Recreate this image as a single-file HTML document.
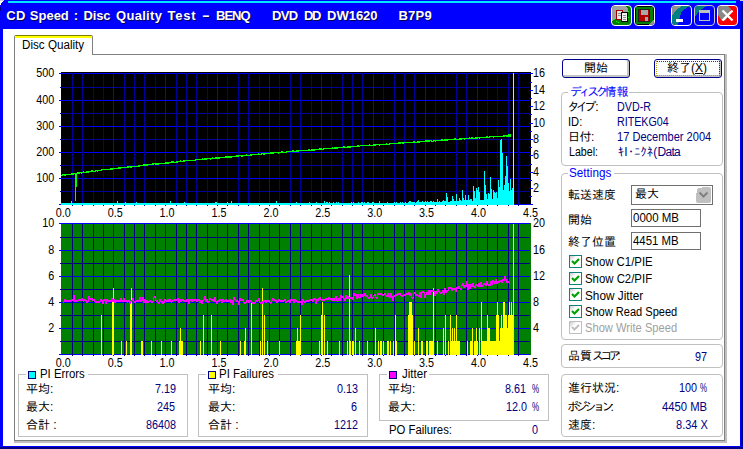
<!DOCTYPE html>
<html lang="ja">
<head>
<meta charset="utf-8">
<title>CD Speed : Disc Quality Test</title>
<style>
html,body{margin:0;padding:0;}
body{width:743px;height:449px;overflow:hidden;background:#0000ff;position:relative;
 font-family:"Liberation Sans","IPAGothic",sans-serif;font-size:12px;color:#000;line-height:14px;}
div,span{position:absolute;box-sizing:border-box;white-space:nowrap;}
#client{left:3px;top:29px;width:737px;height:417px;background:#fff;}
#fr{left:740px;top:3px;width:3px;height:446px;background:#000080;border-left:1px solid #0000ff;}
#fb{left:0;top:446px;width:743px;height:3px;background:#000080;border-top:1px solid #0000ff;}
#cy{left:8px;top:1px;width:728px;height:2px;background:#00e8ff;}
#title{left:7px;top:7px;height:18px;line-height:18px;font-weight:bold;font-size:13px;color:#fff;
 letter-spacing:0;text-shadow:1px 1px 0 #000050;white-space:pre;}
.tb{top:5px;width:21px;height:21px;border:1px solid #fff;border-radius:4px;overflow:hidden;}
#tab{left:14px;top:35px;width:79px;height:20px;border:1px solid #808080;border-top:1px solid #808000;border-bottom:none;border-radius:2px 2px 0 0;background:#fff;overflow:hidden;z-index:3;}
#tab i{position:absolute;left:0;top:0;width:100%;height:2px;background:#ffff00;}
#tab span{left:7px;top:2px;transform:scaleX(.96);}
#panel{left:14px;top:54px;width:711px;height:387px;border:1px solid #808080;background:#fff;}
svg#charts{position:absolute;left:0;top:0;}
.grp{border:1px solid #c0c0c0;}
.rgrp{border:1px solid #c0c0c0;border-radius:4px;}
.cap{background:#fff;padding:0 2px;}
.lbl{color:#000;}
.val{color:#000080;text-align:right;}
.sq{width:8px;height:8px;border:1px solid #000080;}
.btn{height:19px;border:1px solid #000090;border-radius:3px;background:#fff;text-align:center;line-height:16px;box-shadow:inset -1px -2px 0 #c4c4c4, inset -2px 0 0 #b8c4e8;}
.edit{border:1px solid #707070;background:#fff;line-height:15px;padding-left:3px;}
.cb{width:13px;height:13px;border:1px solid #108080;background:linear-gradient(135deg,#c8c8c8 0,#fff 35%);}
.cb svg{position:absolute;left:1px;top:1px;}
.tx{transform-origin:0 0;z-index:5;}
</style>
</head>
<body>
<div id="fr"></div><div id="fb"></div>
<div id="client"></div>
<div id="cy"></div>
<div style="left:0;top:0;width:4px;height:1px;background:#d0d0d0"></div>
<div style="left:0;top:1px;width:3px;height:1px;background:#fff"></div>
<div style="left:0;top:2px;width:2px;height:1px;background:#fff"></div>
<div style="left:0;top:3px;width:1px;height:2px;background:#fff"></div>
<div style="left:0;top:7px;width:1px;height:4px;background:#000080"></div>
<div style="left:740px;top:0;width:3px;height:1px;background:#ccc"></div>
<div id="title"><span style="left:-0.8px;letter-spacing:0.5px">CD </span><span style="left:22.8px;letter-spacing:0px">Speed </span><span style="left:66.8px;letter-spacing:0px">: </span><span style="left:76.6px;letter-spacing:-0.2px">Disc </span><span style="left:109.0px;letter-spacing:0.3px">Quality </span><span style="left:160.5px;letter-spacing:0.8px">Test </span><span style="left:195.3px;letter-spacing:0px;transform:scaleX(1.8);transform-origin:0 0">- </span><span style="left:209.0px;letter-spacing:-1px">BENQ </span><span style="left:265.0px;letter-spacing:-0.7px">DVD </span><span style="left:297.0px;letter-spacing:-1.5px">DD </span><span style="left:320.0px;letter-spacing:0px">DW1620 </span><span style="left:391.5px;letter-spacing:0.2px">B7P9 </span></div>

<!-- title buttons -->
<div class="tb" style="left:611px;background:#008000;">
 <svg width="19" height="19" viewBox="0 0 19 19" style="position:absolute;left:0;top:0" shape-rendering="crispEdges">
  <path d="M0 0h13l3 3v4h-7v6h-6l-3 2z" fill="#a0a0a0"/>
  <path d="M1 10h1v1h-1zM2 13h1v1h-1zM4 15h1v1h-1zM6 16h1v1h-1zM15 3h1v1h-1zM16 5h1v1h-1zM15 8h1v1h-1zM16 11h1v1h-1z" fill="#00ff00"/>
  <rect x="4.5" y="4.5" width="6" height="9" fill="#e8e8e8" stroke="#a00000" stroke-width="1"/>
  <rect x="9.5" y="6.5" width="6" height="9" fill="#f4f4f4" stroke="#000" stroke-width="1"/>
  <path d="M11 9h3M11 11h3M11 13h3M6 7h3M6 9h3" stroke="#909090" stroke-width="1" fill="none"/>
 </svg>
</div>
<div class="tb" style="left:634px;background:#000;">
 <svg width="19" height="19" viewBox="0 0 19 19" style="position:absolute;left:0;top:0" shape-rendering="crispEdges">
  <rect x="1" y="1" width="17" height="17" fill="#008000"/>
  <rect x="3" y="3" width="12" height="13" fill="#202020"/>
  <rect x="4" y="4" width="10" height="11" fill="#b00000"/>
  <rect x="6" y="4" width="7" height="5" fill="#a8a8a8"/>
  <rect x="10" y="11" width="3" height="4" fill="#a8a8a8"/>
  <path d="M13 19h6v-6z" fill="#909090"/>
 </svg>
</div>
<div class="tb" style="left:671px;background:#0000ff;">
 <svg width="19" height="19" viewBox="0 0 19 19" style="position:absolute;left:0;top:0" shape-rendering="crispEdges">
  <path d="M0 0h19c-6 2-10 5-11 10l-2 9h-6z" fill="#008080"/>
  <path d="M0 0h10l-6 4l-4 6z" fill="#909090"/>
  <rect x="4" y="13" width="7" height="3" fill="#fff"/>
 </svg>
</div>
<div class="tb" style="left:694px;background:#0000ff;border-color:#c8c8c8;">
 <svg width="19" height="19" viewBox="0 0 19 19" style="position:absolute;left:0;top:0" shape-rendering="crispEdges">
  <path d="M0 0h12l-7 4l-5 7z" fill="#008080"/>
  <rect x="4.5" y="4.5" width="10" height="10" fill="none" stroke="#c0c0c0" stroke-width="1"/>
  <rect x="4" y="4" width="11" height="3" fill="#c0c0c0"/>
 </svg>
</div>
<div class="tb" style="left:717px;background:#ff0000;">
 <svg width="19" height="19" viewBox="0 0 19 19" style="position:absolute;left:0;top:0">
  <path d="M0 0h10l3 3l-5 11l-4 1l-4-6z" fill="#888888"/>
  <path d="M4.5 4.5l10 10M14.5 4.5l-10 10" stroke="#fff" stroke-width="2.4" fill="none"/>
 </svg>
</div>

<div style="left:14px;top:441px;width:713px;height:2px;background:#c0c0c0"></div><div style="left:725px;top:54px;width:2px;height:389px;background:#c0c0c0"></div>
<div id="panel"></div>
<div id="tab"><i></i></div>

<svg id="charts" width="743" height="449" viewBox="0 0 743 449" shape-rendering="crispEdges"><rect x="61" y="72" width="470" height="133" fill="#000"/><rect x="59" y="73" width="471" height="1" fill="#0000ff"/><rect x="60" y="87" width="470" height="1" fill="#000098"/><rect x="59" y="100" width="471" height="1" fill="#0000ff"/><rect x="60" y="113" width="470" height="1" fill="#000098"/><rect x="59" y="126" width="471" height="1" fill="#0000ff"/><rect x="60" y="139" width="470" height="1" fill="#000098"/><rect x="59" y="152" width="471" height="1" fill="#0000ff"/><rect x="60" y="165" width="470" height="1" fill="#000098"/><rect x="59" y="178" width="471" height="1" fill="#0000ff"/><rect x="60" y="191" width="470" height="1" fill="#000098"/><rect x="59" y="204" width="471" height="1" fill="#0000ff"/><rect x="72" y="73" width="1" height="133" fill="#000098"/><rect x="82" y="73" width="1" height="133" fill="#000098"/><rect x="93" y="73" width="1" height="133" fill="#000098"/><rect x="103" y="73" width="1" height="133" fill="#000098"/><rect x="113" y="73" width="1" height="133" fill="#0000ff"/><rect x="124" y="73" width="1" height="133" fill="#000098"/><rect x="134" y="73" width="1" height="133" fill="#000098"/><rect x="144" y="73" width="1" height="133" fill="#000098"/><rect x="155" y="73" width="1" height="133" fill="#000098"/><rect x="165" y="73" width="1" height="133" fill="#0000ff"/><rect x="176" y="73" width="1" height="133" fill="#000098"/><rect x="186" y="73" width="1" height="133" fill="#000098"/><rect x="196" y="73" width="1" height="133" fill="#000098"/><rect x="207" y="73" width="1" height="133" fill="#000098"/><rect x="217" y="73" width="1" height="133" fill="#0000ff"/><rect x="227" y="73" width="1" height="133" fill="#000098"/><rect x="238" y="73" width="1" height="133" fill="#000098"/><rect x="248" y="73" width="1" height="133" fill="#000098"/><rect x="259" y="73" width="1" height="133" fill="#000098"/><rect x="269" y="73" width="1" height="133" fill="#0000ff"/><rect x="279" y="73" width="1" height="133" fill="#000098"/><rect x="290" y="73" width="1" height="133" fill="#000098"/><rect x="300" y="73" width="1" height="133" fill="#000098"/><rect x="311" y="73" width="1" height="133" fill="#000098"/><rect x="321" y="73" width="1" height="133" fill="#0000ff"/><rect x="331" y="73" width="1" height="133" fill="#000098"/><rect x="342" y="73" width="1" height="133" fill="#000098"/><rect x="352" y="73" width="1" height="133" fill="#000098"/><rect x="362" y="73" width="1" height="133" fill="#000098"/><rect x="373" y="73" width="1" height="133" fill="#0000ff"/><rect x="383" y="73" width="1" height="133" fill="#000098"/><rect x="394" y="73" width="1" height="133" fill="#000098"/><rect x="404" y="73" width="1" height="133" fill="#000098"/><rect x="414" y="73" width="1" height="133" fill="#000098"/><rect x="425" y="73" width="1" height="133" fill="#0000ff"/><rect x="435" y="73" width="1" height="133" fill="#000098"/><rect x="445" y="73" width="1" height="133" fill="#000098"/><rect x="456" y="73" width="1" height="133" fill="#000098"/><rect x="466" y="73" width="1" height="133" fill="#000098"/><rect x="477" y="73" width="1" height="133" fill="#0000ff"/><rect x="487" y="73" width="1" height="133" fill="#000098"/><rect x="497" y="73" width="1" height="133" fill="#000098"/><rect x="508" y="73" width="1" height="133" fill="#000098"/><rect x="518" y="73" width="1" height="133" fill="#000098"/><rect x="529" y="73" width="4" height="1" fill="#0000ff"/><rect x="529" y="82" width="3" height="1" fill="#0000ff"/><rect x="529" y="90" width="4" height="1" fill="#0000ff"/><rect x="529" y="98" width="3" height="1" fill="#0000ff"/><rect x="529" y="106" width="4" height="1" fill="#0000ff"/><rect x="529" y="114" width="3" height="1" fill="#0000ff"/><rect x="529" y="123" width="4" height="1" fill="#0000ff"/><rect x="529" y="131" width="3" height="1" fill="#0000ff"/><rect x="529" y="139" width="4" height="1" fill="#0000ff"/><rect x="529" y="147" width="3" height="1" fill="#0000ff"/><rect x="529" y="155" width="4" height="1" fill="#0000ff"/><rect x="529" y="164" width="3" height="1" fill="#0000ff"/><rect x="529" y="172" width="4" height="1" fill="#0000ff"/><rect x="529" y="180" width="3" height="1" fill="#0000ff"/><rect x="529" y="188" width="4" height="1" fill="#0000ff"/><rect x="529" y="196" width="3" height="1" fill="#0000ff"/><rect x="529" y="204" width="4" height="1" fill="#0000ff"/><rect x="61" y="203" width="1" height="2" fill="#00ffff"/><rect x="62" y="203" width="1" height="2" fill="#00ffff"/><rect x="63" y="203" width="1" height="2" fill="#00ffff"/><rect x="64" y="203" width="1" height="2" fill="#00ffff"/><rect x="65" y="203" width="1" height="2" fill="#00ffff"/><rect x="66" y="203" width="1" height="2" fill="#00ffff"/><rect x="67" y="203" width="1" height="2" fill="#00ffff"/><rect x="68" y="203" width="1" height="2" fill="#00ffff"/><rect x="69" y="203" width="1" height="2" fill="#00ffff"/><rect x="70" y="203" width="1" height="2" fill="#00ffff"/><rect x="71" y="201" width="1" height="4" fill="#00ffff"/><rect x="72" y="203" width="1" height="2" fill="#00ffff"/><rect x="73" y="203" width="1" height="2" fill="#00ffff"/><rect x="74" y="203" width="1" height="2" fill="#00ffff"/><rect x="75" y="203" width="1" height="2" fill="#00ffff"/><rect x="76" y="203" width="1" height="2" fill="#00ffff"/><rect x="77" y="203" width="1" height="2" fill="#00ffff"/><rect x="78" y="203" width="1" height="2" fill="#00ffff"/><rect x="79" y="203" width="1" height="2" fill="#00ffff"/><rect x="80" y="203" width="1" height="2" fill="#00ffff"/><rect x="81" y="203" width="1" height="2" fill="#00ffff"/><rect x="82" y="203" width="1" height="2" fill="#00ffff"/><rect x="83" y="203" width="1" height="2" fill="#00ffff"/><rect x="84" y="203" width="1" height="2" fill="#00ffff"/><rect x="85" y="203" width="1" height="2" fill="#00ffff"/><rect x="86" y="203" width="1" height="2" fill="#00ffff"/><rect x="87" y="203" width="1" height="2" fill="#00ffff"/><rect x="88" y="203" width="1" height="2" fill="#00ffff"/><rect x="89" y="203" width="1" height="2" fill="#00ffff"/><rect x="90" y="203" width="1" height="2" fill="#00ffff"/><rect x="91" y="203" width="1" height="2" fill="#00ffff"/><rect x="92" y="203" width="1" height="2" fill="#00ffff"/><rect x="93" y="203" width="1" height="2" fill="#00ffff"/><rect x="94" y="203" width="1" height="2" fill="#00ffff"/><rect x="95" y="203" width="1" height="2" fill="#00ffff"/><rect x="96" y="203" width="1" height="2" fill="#00ffff"/><rect x="97" y="203" width="1" height="2" fill="#00ffff"/><rect x="98" y="203" width="1" height="2" fill="#00ffff"/><rect x="99" y="203" width="1" height="2" fill="#00ffff"/><rect x="100" y="203" width="1" height="2" fill="#00ffff"/><rect x="101" y="203" width="1" height="2" fill="#00ffff"/><rect x="102" y="203" width="1" height="2" fill="#00ffff"/><rect x="103" y="203" width="1" height="2" fill="#00ffff"/><rect x="104" y="203" width="1" height="2" fill="#00ffff"/><rect x="105" y="203" width="1" height="2" fill="#00ffff"/><rect x="106" y="203" width="1" height="2" fill="#00ffff"/><rect x="107" y="203" width="1" height="2" fill="#00ffff"/><rect x="108" y="203" width="1" height="2" fill="#00ffff"/><rect x="109" y="203" width="1" height="2" fill="#00ffff"/><rect x="110" y="203" width="1" height="2" fill="#00ffff"/><rect x="111" y="203" width="1" height="2" fill="#00ffff"/><rect x="112" y="203" width="1" height="2" fill="#00ffff"/><rect x="113" y="203" width="1" height="2" fill="#00ffff"/><rect x="114" y="203" width="1" height="2" fill="#00ffff"/><rect x="115" y="203" width="1" height="2" fill="#00ffff"/><rect x="116" y="203" width="1" height="2" fill="#00ffff"/><rect x="117" y="201" width="1" height="4" fill="#00ffff"/><rect x="118" y="203" width="1" height="2" fill="#00ffff"/><rect x="119" y="203" width="1" height="2" fill="#00ffff"/><rect x="120" y="203" width="1" height="2" fill="#00ffff"/><rect x="121" y="203" width="1" height="2" fill="#00ffff"/><rect x="122" y="203" width="1" height="2" fill="#00ffff"/><rect x="123" y="203" width="1" height="2" fill="#00ffff"/><rect x="124" y="203" width="1" height="2" fill="#00ffff"/><rect x="125" y="202" width="1" height="3" fill="#00ffff"/><rect x="126" y="203" width="1" height="2" fill="#00ffff"/><rect x="127" y="203" width="1" height="2" fill="#00ffff"/><rect x="128" y="203" width="1" height="2" fill="#00ffff"/><rect x="129" y="203" width="1" height="2" fill="#00ffff"/><rect x="130" y="203" width="1" height="2" fill="#00ffff"/><rect x="131" y="203" width="1" height="2" fill="#00ffff"/><rect x="132" y="203" width="1" height="2" fill="#00ffff"/><rect x="133" y="203" width="1" height="2" fill="#00ffff"/><rect x="134" y="203" width="1" height="2" fill="#00ffff"/><rect x="135" y="203" width="1" height="2" fill="#00ffff"/><rect x="136" y="202" width="1" height="3" fill="#00ffff"/><rect x="137" y="203" width="1" height="2" fill="#00ffff"/><rect x="138" y="203" width="1" height="2" fill="#00ffff"/><rect x="139" y="203" width="1" height="2" fill="#00ffff"/><rect x="140" y="203" width="1" height="2" fill="#00ffff"/><rect x="141" y="203" width="1" height="2" fill="#00ffff"/><rect x="142" y="203" width="1" height="2" fill="#00ffff"/><rect x="143" y="203" width="1" height="2" fill="#00ffff"/><rect x="144" y="203" width="1" height="2" fill="#00ffff"/><rect x="145" y="203" width="1" height="2" fill="#00ffff"/><rect x="146" y="203" width="1" height="2" fill="#00ffff"/><rect x="147" y="203" width="1" height="2" fill="#00ffff"/><rect x="148" y="203" width="1" height="2" fill="#00ffff"/><rect x="149" y="203" width="1" height="2" fill="#00ffff"/><rect x="150" y="203" width="1" height="2" fill="#00ffff"/><rect x="151" y="203" width="1" height="2" fill="#00ffff"/><rect x="152" y="203" width="1" height="2" fill="#00ffff"/><rect x="153" y="203" width="1" height="2" fill="#00ffff"/><rect x="154" y="203" width="1" height="2" fill="#00ffff"/><rect x="155" y="203" width="1" height="2" fill="#00ffff"/><rect x="156" y="203" width="1" height="2" fill="#00ffff"/><rect x="157" y="203" width="1" height="2" fill="#00ffff"/><rect x="158" y="203" width="1" height="2" fill="#00ffff"/><rect x="159" y="203" width="1" height="2" fill="#00ffff"/><rect x="160" y="203" width="1" height="2" fill="#00ffff"/><rect x="161" y="203" width="1" height="2" fill="#00ffff"/><rect x="162" y="203" width="1" height="2" fill="#00ffff"/><rect x="163" y="203" width="1" height="2" fill="#00ffff"/><rect x="164" y="203" width="1" height="2" fill="#00ffff"/><rect x="165" y="203" width="1" height="2" fill="#00ffff"/><rect x="166" y="203" width="1" height="2" fill="#00ffff"/><rect x="167" y="203" width="1" height="2" fill="#00ffff"/><rect x="168" y="203" width="1" height="2" fill="#00ffff"/><rect x="169" y="203" width="1" height="2" fill="#00ffff"/><rect x="170" y="201" width="1" height="4" fill="#00ffff"/><rect x="171" y="203" width="1" height="2" fill="#00ffff"/><rect x="172" y="203" width="1" height="2" fill="#00ffff"/><rect x="173" y="203" width="1" height="2" fill="#00ffff"/><rect x="174" y="203" width="1" height="2" fill="#00ffff"/><rect x="175" y="203" width="1" height="2" fill="#00ffff"/><rect x="176" y="203" width="1" height="2" fill="#00ffff"/><rect x="177" y="203" width="1" height="2" fill="#00ffff"/><rect x="178" y="203" width="1" height="2" fill="#00ffff"/><rect x="179" y="203" width="1" height="2" fill="#00ffff"/><rect x="180" y="203" width="1" height="2" fill="#00ffff"/><rect x="181" y="203" width="1" height="2" fill="#00ffff"/><rect x="182" y="203" width="1" height="2" fill="#00ffff"/><rect x="183" y="203" width="1" height="2" fill="#00ffff"/><rect x="184" y="202" width="1" height="3" fill="#00ffff"/><rect x="185" y="203" width="1" height="2" fill="#00ffff"/><rect x="186" y="203" width="1" height="2" fill="#00ffff"/><rect x="187" y="203" width="1" height="2" fill="#00ffff"/><rect x="188" y="203" width="1" height="2" fill="#00ffff"/><rect x="189" y="203" width="1" height="2" fill="#00ffff"/><rect x="190" y="203" width="1" height="2" fill="#00ffff"/><rect x="191" y="203" width="1" height="2" fill="#00ffff"/><rect x="192" y="203" width="1" height="2" fill="#00ffff"/><rect x="193" y="203" width="1" height="2" fill="#00ffff"/><rect x="194" y="203" width="1" height="2" fill="#00ffff"/><rect x="195" y="203" width="1" height="2" fill="#00ffff"/><rect x="196" y="203" width="1" height="2" fill="#00ffff"/><rect x="197" y="203" width="1" height="2" fill="#00ffff"/><rect x="198" y="203" width="1" height="2" fill="#00ffff"/><rect x="199" y="203" width="1" height="2" fill="#00ffff"/><rect x="200" y="203" width="1" height="2" fill="#00ffff"/><rect x="201" y="203" width="1" height="2" fill="#00ffff"/><rect x="202" y="203" width="1" height="2" fill="#00ffff"/><rect x="203" y="203" width="1" height="2" fill="#00ffff"/><rect x="204" y="203" width="1" height="2" fill="#00ffff"/><rect x="205" y="203" width="1" height="2" fill="#00ffff"/><rect x="206" y="203" width="1" height="2" fill="#00ffff"/><rect x="207" y="203" width="1" height="2" fill="#00ffff"/><rect x="208" y="203" width="1" height="2" fill="#00ffff"/><rect x="209" y="203" width="1" height="2" fill="#00ffff"/><rect x="210" y="203" width="1" height="2" fill="#00ffff"/><rect x="211" y="203" width="1" height="2" fill="#00ffff"/><rect x="212" y="203" width="1" height="2" fill="#00ffff"/><rect x="213" y="203" width="1" height="2" fill="#00ffff"/><rect x="214" y="203" width="1" height="2" fill="#00ffff"/><rect x="215" y="202" width="1" height="3" fill="#00ffff"/><rect x="216" y="202" width="1" height="3" fill="#00ffff"/><rect x="217" y="203" width="1" height="2" fill="#00ffff"/><rect x="218" y="203" width="1" height="2" fill="#00ffff"/><rect x="219" y="203" width="1" height="2" fill="#00ffff"/><rect x="220" y="203" width="1" height="2" fill="#00ffff"/><rect x="221" y="203" width="1" height="2" fill="#00ffff"/><rect x="222" y="203" width="1" height="2" fill="#00ffff"/><rect x="223" y="203" width="1" height="2" fill="#00ffff"/><rect x="224" y="203" width="1" height="2" fill="#00ffff"/><rect x="225" y="203" width="1" height="2" fill="#00ffff"/><rect x="226" y="203" width="1" height="2" fill="#00ffff"/><rect x="227" y="202" width="1" height="3" fill="#00ffff"/><rect x="228" y="203" width="1" height="2" fill="#00ffff"/><rect x="229" y="203" width="1" height="2" fill="#00ffff"/><rect x="230" y="203" width="1" height="2" fill="#00ffff"/><rect x="231" y="201" width="1" height="4" fill="#00ffff"/><rect x="232" y="203" width="1" height="2" fill="#00ffff"/><rect x="233" y="203" width="1" height="2" fill="#00ffff"/><rect x="234" y="203" width="1" height="2" fill="#00ffff"/><rect x="235" y="203" width="1" height="2" fill="#00ffff"/><rect x="236" y="203" width="1" height="2" fill="#00ffff"/><rect x="237" y="203" width="1" height="2" fill="#00ffff"/><rect x="238" y="203" width="1" height="2" fill="#00ffff"/><rect x="239" y="203" width="1" height="2" fill="#00ffff"/><rect x="240" y="203" width="1" height="2" fill="#00ffff"/><rect x="241" y="203" width="1" height="2" fill="#00ffff"/><rect x="242" y="203" width="1" height="2" fill="#00ffff"/><rect x="243" y="203" width="1" height="2" fill="#00ffff"/><rect x="244" y="203" width="1" height="2" fill="#00ffff"/><rect x="245" y="203" width="1" height="2" fill="#00ffff"/><rect x="246" y="203" width="1" height="2" fill="#00ffff"/><rect x="247" y="203" width="1" height="2" fill="#00ffff"/><rect x="248" y="203" width="1" height="2" fill="#00ffff"/><rect x="249" y="203" width="1" height="2" fill="#00ffff"/><rect x="250" y="203" width="1" height="2" fill="#00ffff"/><rect x="251" y="203" width="1" height="2" fill="#00ffff"/><rect x="252" y="203" width="1" height="2" fill="#00ffff"/><rect x="253" y="203" width="1" height="2" fill="#00ffff"/><rect x="254" y="203" width="1" height="2" fill="#00ffff"/><rect x="255" y="203" width="1" height="2" fill="#00ffff"/><rect x="256" y="203" width="1" height="2" fill="#00ffff"/><rect x="257" y="203" width="1" height="2" fill="#00ffff"/><rect x="258" y="203" width="1" height="2" fill="#00ffff"/><rect x="259" y="203" width="1" height="2" fill="#00ffff"/><rect x="260" y="203" width="1" height="2" fill="#00ffff"/><rect x="261" y="203" width="1" height="2" fill="#00ffff"/><rect x="262" y="203" width="1" height="2" fill="#00ffff"/><rect x="263" y="203" width="1" height="2" fill="#00ffff"/><rect x="264" y="203" width="1" height="2" fill="#00ffff"/><rect x="265" y="203" width="1" height="2" fill="#00ffff"/><rect x="266" y="203" width="1" height="2" fill="#00ffff"/><rect x="267" y="203" width="1" height="2" fill="#00ffff"/><rect x="268" y="203" width="1" height="2" fill="#00ffff"/><rect x="269" y="203" width="1" height="2" fill="#00ffff"/><rect x="270" y="203" width="1" height="2" fill="#00ffff"/><rect x="271" y="203" width="1" height="2" fill="#00ffff"/><rect x="272" y="203" width="1" height="2" fill="#00ffff"/><rect x="273" y="203" width="1" height="2" fill="#00ffff"/><rect x="274" y="203" width="1" height="2" fill="#00ffff"/><rect x="275" y="203" width="1" height="2" fill="#00ffff"/><rect x="276" y="201" width="1" height="4" fill="#00ffff"/><rect x="277" y="203" width="1" height="2" fill="#00ffff"/><rect x="278" y="203" width="1" height="2" fill="#00ffff"/><rect x="279" y="203" width="1" height="2" fill="#00ffff"/><rect x="280" y="203" width="1" height="2" fill="#00ffff"/><rect x="281" y="203" width="1" height="2" fill="#00ffff"/><rect x="282" y="203" width="1" height="2" fill="#00ffff"/><rect x="283" y="203" width="1" height="2" fill="#00ffff"/><rect x="284" y="203" width="1" height="2" fill="#00ffff"/><rect x="285" y="203" width="1" height="2" fill="#00ffff"/><rect x="286" y="203" width="1" height="2" fill="#00ffff"/><rect x="287" y="203" width="1" height="2" fill="#00ffff"/><rect x="288" y="203" width="1" height="2" fill="#00ffff"/><rect x="289" y="203" width="1" height="2" fill="#00ffff"/><rect x="290" y="203" width="1" height="2" fill="#00ffff"/><rect x="291" y="203" width="1" height="2" fill="#00ffff"/><rect x="292" y="203" width="1" height="2" fill="#00ffff"/><rect x="293" y="203" width="1" height="2" fill="#00ffff"/><rect x="294" y="203" width="1" height="2" fill="#00ffff"/><rect x="295" y="203" width="1" height="2" fill="#00ffff"/><rect x="296" y="202" width="1" height="3" fill="#00ffff"/><rect x="297" y="203" width="1" height="2" fill="#00ffff"/><rect x="298" y="203" width="1" height="2" fill="#00ffff"/><rect x="299" y="203" width="1" height="2" fill="#00ffff"/><rect x="300" y="203" width="1" height="2" fill="#00ffff"/><rect x="301" y="203" width="1" height="2" fill="#00ffff"/><rect x="302" y="203" width="1" height="2" fill="#00ffff"/><rect x="303" y="203" width="1" height="2" fill="#00ffff"/><rect x="304" y="203" width="1" height="2" fill="#00ffff"/><rect x="305" y="203" width="1" height="2" fill="#00ffff"/><rect x="306" y="203" width="1" height="2" fill="#00ffff"/><rect x="307" y="203" width="1" height="2" fill="#00ffff"/><rect x="308" y="203" width="1" height="2" fill="#00ffff"/><rect x="309" y="202" width="1" height="3" fill="#00ffff"/><rect x="310" y="203" width="1" height="2" fill="#00ffff"/><rect x="311" y="203" width="1" height="2" fill="#00ffff"/><rect x="312" y="203" width="1" height="2" fill="#00ffff"/><rect x="313" y="203" width="1" height="2" fill="#00ffff"/><rect x="314" y="203" width="1" height="2" fill="#00ffff"/><rect x="315" y="203" width="1" height="2" fill="#00ffff"/><rect x="316" y="202" width="1" height="3" fill="#00ffff"/><rect x="317" y="203" width="1" height="2" fill="#00ffff"/><rect x="318" y="203" width="1" height="2" fill="#00ffff"/><rect x="319" y="203" width="1" height="2" fill="#00ffff"/><rect x="320" y="203" width="1" height="2" fill="#00ffff"/><rect x="321" y="203" width="1" height="2" fill="#00ffff"/><rect x="322" y="203" width="1" height="2" fill="#00ffff"/><rect x="323" y="203" width="1" height="2" fill="#00ffff"/><rect x="324" y="201" width="1" height="4" fill="#00ffff"/><rect x="325" y="203" width="1" height="2" fill="#00ffff"/><rect x="326" y="202" width="1" height="3" fill="#00ffff"/><rect x="327" y="202" width="1" height="3" fill="#00ffff"/><rect x="328" y="203" width="1" height="2" fill="#00ffff"/><rect x="329" y="202" width="1" height="3" fill="#00ffff"/><rect x="330" y="203" width="1" height="2" fill="#00ffff"/><rect x="331" y="203" width="1" height="2" fill="#00ffff"/><rect x="332" y="203" width="1" height="2" fill="#00ffff"/><rect x="333" y="202" width="1" height="3" fill="#00ffff"/><rect x="334" y="203" width="1" height="2" fill="#00ffff"/><rect x="335" y="203" width="1" height="2" fill="#00ffff"/><rect x="336" y="202" width="1" height="3" fill="#00ffff"/><rect x="337" y="203" width="1" height="2" fill="#00ffff"/><rect x="338" y="202" width="1" height="3" fill="#00ffff"/><rect x="339" y="203" width="1" height="2" fill="#00ffff"/><rect x="340" y="203" width="1" height="2" fill="#00ffff"/><rect x="341" y="203" width="1" height="2" fill="#00ffff"/><rect x="342" y="203" width="1" height="2" fill="#00ffff"/><rect x="343" y="203" width="1" height="2" fill="#00ffff"/><rect x="344" y="203" width="1" height="2" fill="#00ffff"/><rect x="345" y="203" width="1" height="2" fill="#00ffff"/><rect x="346" y="203" width="1" height="2" fill="#00ffff"/><rect x="347" y="203" width="1" height="2" fill="#00ffff"/><rect x="348" y="203" width="1" height="2" fill="#00ffff"/><rect x="349" y="203" width="1" height="2" fill="#00ffff"/><rect x="350" y="203" width="1" height="2" fill="#00ffff"/><rect x="351" y="202" width="1" height="3" fill="#00ffff"/><rect x="352" y="203" width="1" height="2" fill="#00ffff"/><rect x="353" y="202" width="1" height="3" fill="#00ffff"/><rect x="354" y="203" width="1" height="2" fill="#00ffff"/><rect x="355" y="203" width="1" height="2" fill="#00ffff"/><rect x="356" y="203" width="1" height="2" fill="#00ffff"/><rect x="357" y="203" width="1" height="2" fill="#00ffff"/><rect x="358" y="202" width="1" height="3" fill="#00ffff"/><rect x="359" y="203" width="1" height="2" fill="#00ffff"/><rect x="360" y="203" width="1" height="2" fill="#00ffff"/><rect x="361" y="202" width="1" height="3" fill="#00ffff"/><rect x="362" y="202" width="1" height="3" fill="#00ffff"/><rect x="363" y="203" width="1" height="2" fill="#00ffff"/><rect x="364" y="202" width="1" height="3" fill="#00ffff"/><rect x="365" y="203" width="1" height="2" fill="#00ffff"/><rect x="366" y="203" width="1" height="2" fill="#00ffff"/><rect x="367" y="202" width="1" height="3" fill="#00ffff"/><rect x="368" y="202" width="1" height="3" fill="#00ffff"/><rect x="369" y="203" width="1" height="2" fill="#00ffff"/><rect x="370" y="203" width="1" height="2" fill="#00ffff"/><rect x="371" y="203" width="1" height="2" fill="#00ffff"/><rect x="372" y="202" width="1" height="3" fill="#00ffff"/><rect x="373" y="202" width="1" height="3" fill="#00ffff"/><rect x="374" y="203" width="1" height="2" fill="#00ffff"/><rect x="375" y="203" width="1" height="2" fill="#00ffff"/><rect x="376" y="203" width="1" height="2" fill="#00ffff"/><rect x="377" y="203" width="1" height="2" fill="#00ffff"/><rect x="378" y="203" width="1" height="2" fill="#00ffff"/><rect x="379" y="201" width="1" height="4" fill="#00ffff"/><rect x="380" y="203" width="1" height="2" fill="#00ffff"/><rect x="381" y="203" width="1" height="2" fill="#00ffff"/><rect x="382" y="203" width="1" height="2" fill="#00ffff"/><rect x="383" y="203" width="1" height="2" fill="#00ffff"/><rect x="384" y="203" width="1" height="2" fill="#00ffff"/><rect x="385" y="203" width="1" height="2" fill="#00ffff"/><rect x="386" y="203" width="1" height="2" fill="#00ffff"/><rect x="387" y="202" width="1" height="3" fill="#00ffff"/><rect x="388" y="203" width="1" height="2" fill="#00ffff"/><rect x="389" y="203" width="1" height="2" fill="#00ffff"/><rect x="390" y="203" width="1" height="2" fill="#00ffff"/><rect x="391" y="203" width="1" height="2" fill="#00ffff"/><rect x="392" y="203" width="1" height="2" fill="#00ffff"/><rect x="393" y="203" width="1" height="2" fill="#00ffff"/><rect x="394" y="202" width="1" height="3" fill="#00ffff"/><rect x="395" y="203" width="1" height="2" fill="#00ffff"/><rect x="396" y="202" width="1" height="3" fill="#00ffff"/><rect x="397" y="203" width="1" height="2" fill="#00ffff"/><rect x="398" y="203" width="1" height="2" fill="#00ffff"/><rect x="399" y="203" width="1" height="2" fill="#00ffff"/><rect x="400" y="202" width="1" height="3" fill="#00ffff"/><rect x="401" y="203" width="1" height="2" fill="#00ffff"/><rect x="402" y="202" width="1" height="3" fill="#00ffff"/><rect x="403" y="203" width="1" height="2" fill="#00ffff"/><rect x="404" y="203" width="1" height="2" fill="#00ffff"/><rect x="405" y="202" width="1" height="3" fill="#00ffff"/><rect x="406" y="203" width="1" height="2" fill="#00ffff"/><rect x="407" y="203" width="1" height="2" fill="#00ffff"/><rect x="408" y="202" width="1" height="3" fill="#00ffff"/><rect x="409" y="201" width="1" height="4" fill="#00ffff"/><rect x="410" y="201" width="1" height="4" fill="#00ffff"/><rect x="411" y="202" width="1" height="3" fill="#00ffff"/><rect x="412" y="202" width="1" height="3" fill="#00ffff"/><rect x="413" y="202" width="1" height="3" fill="#00ffff"/><rect x="414" y="202" width="1" height="3" fill="#00ffff"/><rect x="415" y="203" width="1" height="2" fill="#00ffff"/><rect x="416" y="202" width="1" height="3" fill="#00ffff"/><rect x="417" y="201" width="1" height="4" fill="#00ffff"/><rect x="418" y="200" width="1" height="5" fill="#00ffff"/><rect x="419" y="202" width="1" height="3" fill="#00ffff"/><rect x="420" y="202" width="1" height="3" fill="#00ffff"/><rect x="421" y="202" width="1" height="3" fill="#00ffff"/><rect x="422" y="201" width="1" height="4" fill="#00ffff"/><rect x="423" y="202" width="1" height="3" fill="#00ffff"/><rect x="424" y="202" width="1" height="3" fill="#00ffff"/><rect x="425" y="201" width="1" height="4" fill="#00ffff"/><rect x="426" y="202" width="1" height="3" fill="#00ffff"/><rect x="427" y="201" width="1" height="4" fill="#00ffff"/><rect x="428" y="202" width="1" height="3" fill="#00ffff"/><rect x="429" y="202" width="1" height="3" fill="#00ffff"/><rect x="430" y="201" width="1" height="4" fill="#00ffff"/><rect x="431" y="201" width="1" height="4" fill="#00ffff"/><rect x="432" y="202" width="1" height="3" fill="#00ffff"/><rect x="433" y="201" width="1" height="4" fill="#00ffff"/><rect x="434" y="202" width="1" height="3" fill="#00ffff"/><rect x="435" y="202" width="1" height="3" fill="#00ffff"/><rect x="436" y="202" width="1" height="3" fill="#00ffff"/><rect x="437" y="199" width="1" height="6" fill="#00ffff"/><rect x="438" y="202" width="1" height="3" fill="#00ffff"/><rect x="439" y="201" width="1" height="4" fill="#00ffff"/><rect x="440" y="202" width="1" height="3" fill="#00ffff"/><rect x="441" y="202" width="1" height="3" fill="#00ffff"/><rect x="442" y="201" width="1" height="4" fill="#00ffff"/><rect x="443" y="200" width="1" height="5" fill="#00ffff"/><rect x="444" y="201" width="1" height="4" fill="#00ffff"/><rect x="445" y="201" width="1" height="4" fill="#00ffff"/><rect x="446" y="193" width="1" height="12" fill="#00ffff"/><rect x="447" y="197" width="1" height="8" fill="#00ffff"/><rect x="448" y="202" width="1" height="3" fill="#00ffff"/><rect x="449" y="202" width="1" height="3" fill="#00ffff"/><rect x="450" y="201" width="1" height="4" fill="#00ffff"/><rect x="451" y="201" width="1" height="4" fill="#00ffff"/><rect x="452" y="196" width="1" height="9" fill="#00ffff"/><rect x="453" y="199" width="1" height="6" fill="#00ffff"/><rect x="454" y="201" width="1" height="4" fill="#00ffff"/><rect x="455" y="201" width="1" height="4" fill="#00ffff"/><rect x="456" y="194" width="1" height="11" fill="#00ffff"/><rect x="457" y="201" width="1" height="4" fill="#00ffff"/><rect x="458" y="201" width="1" height="4" fill="#00ffff"/><rect x="459" y="198" width="1" height="7" fill="#00ffff"/><rect x="460" y="200" width="1" height="5" fill="#00ffff"/><rect x="461" y="201" width="1" height="4" fill="#00ffff"/><rect x="462" y="190" width="1" height="15" fill="#00ffff"/><rect x="463" y="198" width="1" height="7" fill="#00ffff"/><rect x="464" y="200" width="1" height="5" fill="#00ffff"/><rect x="465" y="195" width="1" height="10" fill="#00ffff"/><rect x="466" y="200" width="1" height="5" fill="#00ffff"/><rect x="467" y="200" width="1" height="5" fill="#00ffff"/><rect x="468" y="195" width="1" height="10" fill="#00ffff"/><rect x="469" y="200" width="1" height="5" fill="#00ffff"/><rect x="470" y="199" width="1" height="6" fill="#00ffff"/><rect x="471" y="199" width="1" height="6" fill="#00ffff"/><rect x="472" y="201" width="1" height="4" fill="#00ffff"/><rect x="473" y="186" width="1" height="19" fill="#00ffff"/><rect x="474" y="191" width="1" height="14" fill="#00ffff"/><rect x="475" y="198" width="1" height="7" fill="#00ffff"/><rect x="476" y="188" width="1" height="17" fill="#00ffff"/><rect x="477" y="190" width="1" height="15" fill="#00ffff"/><rect x="478" y="187" width="1" height="18" fill="#00ffff"/><rect x="479" y="192" width="1" height="13" fill="#00ffff"/><rect x="480" y="200" width="1" height="5" fill="#00ffff"/><rect x="481" y="200" width="1" height="5" fill="#00ffff"/><rect x="482" y="200" width="1" height="5" fill="#00ffff"/><rect x="483" y="200" width="1" height="5" fill="#00ffff"/><rect x="484" y="171" width="1" height="34" fill="#00ffff"/><rect x="485" y="185" width="1" height="20" fill="#00ffff"/><rect x="486" y="194" width="1" height="11" fill="#00ffff"/><rect x="487" y="199" width="1" height="6" fill="#00ffff"/><rect x="488" y="193" width="1" height="12" fill="#00ffff"/><rect x="489" y="194" width="1" height="11" fill="#00ffff"/><rect x="490" y="177" width="1" height="28" fill="#00ffff"/><rect x="491" y="189" width="1" height="16" fill="#00ffff"/><rect x="492" y="199" width="1" height="6" fill="#00ffff"/><rect x="493" y="190" width="1" height="15" fill="#00ffff"/><rect x="494" y="192" width="1" height="13" fill="#00ffff"/><rect x="495" y="193" width="1" height="12" fill="#00ffff"/><rect x="496" y="192" width="1" height="13" fill="#00ffff"/><rect x="497" y="198" width="1" height="7" fill="#00ffff"/><rect x="498" y="180" width="1" height="25" fill="#00ffff"/><rect x="499" y="187" width="1" height="18" fill="#00ffff"/><rect x="500" y="140" width="1" height="65" fill="#00ffff"/><rect x="501" y="139" width="1" height="66" fill="#00ffff"/><rect x="502" y="153" width="1" height="52" fill="#00ffff"/><rect x="503" y="190" width="1" height="15" fill="#00ffff"/><rect x="504" y="185" width="1" height="20" fill="#00ffff"/><rect x="505" y="176" width="1" height="29" fill="#00ffff"/><rect x="506" y="156" width="1" height="49" fill="#00ffff"/><rect x="507" y="166" width="1" height="39" fill="#00ffff"/><rect x="508" y="183" width="1" height="22" fill="#00ffff"/><rect x="509" y="191" width="1" height="14" fill="#00ffff"/><rect x="510" y="179" width="1" height="26" fill="#00ffff"/><rect x="511" y="190" width="1" height="15" fill="#00ffff"/><rect x="512" y="188" width="1" height="17" fill="#00ffff"/><rect x="513" y="73" width="1" height="132" fill="#d8d8d8"/><path d="M61 175.8 L62 175.3 L63 175.0 L64 174.6 L65 175.1 L66 174.9 L67 174.5 L68 174.7 L69 174.3 L70 174.6 L71 174.3 L72 173.7 L73 174.2 L74 173.3 L75 173.6 L76 173.3 L77 173.1 L78 172.8 L79 173.3 L80 172.5 L81 172.8 L82 173.0 L83 172.2 L84 172.1 L85 172.3 L86 172.1 L87 172.1 L88 172.1 L89 171.4 L90 171.4 L91 171.3 L92 170.9 L93 171.6 L94 171.4 L95 171.2 L96 170.4 L97 171.0 L98 170.8 L99 170.4 L100 170.6 L101 170.2 L102 169.9 L103 169.6 L104 169.6 L105 169.3 L106 169.5 L107 169.7 L108 169.6 L109 169.6 L110 169.3 L111 168.8 L112 169.0 L113 168.7 L114 168.9 L115 168.6 L116 168.2 L117 168.4 L118 168.6 L119 167.8 L120 168.3 L121 167.4 L122 167.5 L123 167.4 L124 167.7 L125 167.8 L126 167.5 L127 167.0 L128 167.4 L129 166.8 L130 166.6 L131 167.1 L132 166.7 L133 166.7 L134 166.5 L135 166.7 L136 166.1 L137 166.4 L138 166.1 L139 166.1 L140 165.7 L141 165.8 L142 165.6 L143 165.2 L144 165.0 L145 165.3 L146 164.7 L147 165.3 L148 164.5 L149 164.3 L150 164.3 L151 164.9 L152 164.3 L153 164.0 L154 163.8 L155 163.7 L156 164.2 L157 164.0 L158 164.0 L159 163.9 L160 163.2 L161 163.6 L162 163.2 L163 163.6 L164 163.5 L165 163.4 L166 162.6 L167 163.2 L168 163.1 L169 163.0 L170 162.2 L171 162.2 L172 162.0 L173 161.8 L174 162.5 L175 162.3 L176 162.1 L177 162.1 L178 161.9 L179 161.4 L180 161.2 L181 161.1 L182 161.6 L183 161.0 L184 161.0 L185 161.0 L186 160.5 L187 160.6 L188 160.5 L189 160.8 L190 160.4 L191 160.3 L192 160.8 L193 160.3 L194 160.5 L195 160.2 L196 159.5 L197 159.8 L198 159.7 L199 159.9 L200 159.4 L201 159.7 L202 159.4 L203 159.0 L204 159.5 L205 158.7 L206 159.3 L207 158.6 L208 158.4 L209 158.5 L210 158.9 L211 159.0 L212 158.0 L213 158.3 L214 158.2 L215 158.4 L216 157.8 L217 158.0 L218 157.7 L219 158.1 L220 157.5 L221 158.0 L222 157.3 L223 157.2 L224 157.5 L225 157.2 L226 156.8 L227 157.2 L228 156.6 L229 157.1 L230 157.0 L231 157.0 L232 156.7 L233 156.4 L234 156.3 L235 156.2 L236 156.6 L237 155.8 L238 156.4 L239 155.5 L240 155.6 L241 155.6 L242 156.1 L243 155.6 L244 155.4 L245 155.8 L246 155.1 L247 155.2 L248 155.2 L249 155.3 L250 155.2 L251 155.0 L252 154.7 L253 154.6 L254 154.3 L255 154.9 L256 154.6 L257 154.6 L258 154.0 L259 154.2 L260 154.4 L261 154.1 L262 153.6 L263 153.8 L264 154.1 L265 153.5 L266 153.3 L267 153.4 L268 153.6 L269 153.7 L270 153.0 L271 152.9 L272 152.9 L273 152.9 L274 153.0 L275 152.5 L276 152.6 L277 152.4 L278 153.0 L279 152.7 L280 152.1 L281 152.8 L282 151.9 L283 152.1 L284 152.5 L285 152.3 L286 152.1 L287 151.8 L288 151.5 L289 151.8 L290 151.2 L291 151.3 L292 151.3 L293 150.9 L294 151.2 L295 151.5 L296 151.3 L297 151.0 L298 151.1 L299 150.8 L300 150.5 L301 150.8 L302 150.5 L303 150.8 L304 150.8 L305 150.3 L306 150.4 L307 150.4 L308 150.1 L309 149.8 L310 150.2 L311 150.2 L312 150.1 L313 149.9 L314 150.0 L315 149.7 L316 149.6 L317 149.4 L318 149.2 L319 149.4 L320 148.8 L321 149.0 L322 149.3 L323 149.1 L324 149.0 L325 148.6 L326 148.6 L327 148.6 L328 148.7 L329 148.4 L330 148.6 L331 148.7 L332 148.0 L333 148.3 L334 148.3 L335 147.9 L336 147.9 L337 148.3 L338 147.4 L339 147.7 L340 147.3 L341 147.8 L342 147.9 L343 147.4 L344 147.0 L345 147.3 L346 147.2 L347 147.3 L348 147.0 L349 147.1 L350 147.2 L351 146.8 L352 146.6 L353 147.0 L354 146.3 L355 146.6 L356 146.3 L357 146.6 L358 145.9 L359 146.6 L360 146.0 L361 145.6 L362 145.7 L363 145.8 L364 145.4 L365 145.7 L366 145.6 L367 145.8 L368 145.4 L369 145.2 L370 145.1 L371 145.5 L372 145.6 L373 145.2 L374 144.8 L375 145.3 L376 144.8 L377 144.6 L378 144.4 L379 144.9 L380 144.9 L381 144.7 L382 144.4 L383 144.4 L384 144.1 L385 144.7 L386 144.0 L387 144.2 L388 144.3 L389 144.2 L390 143.9 L391 143.6 L392 143.8 L393 143.3 L394 143.9 L395 143.4 L396 143.8 L397 143.2 L398 143.2 L399 143.0 L400 143.1 L401 142.8 L402 142.6 L403 143.1 L404 142.7 L405 142.6 L406 142.6 L407 142.6 L408 142.5 L409 142.6 L410 142.6 L411 142.3 L412 142.7 L413 142.6 L414 141.8 L415 142.4 L416 142.4 L417 142.2 L418 141.6 L419 142.1 L420 141.9 L421 141.2 L422 141.2 L423 141.9 L424 141.6 L425 141.2 L426 141.0 L427 140.9 L428 140.9 L429 141.4 L430 140.9 L431 140.7 L432 141.3 L433 141.1 L434 140.5 L435 141.0 L436 140.7 L437 140.8 L438 140.6 L439 140.8 L440 140.6 L441 140.6 L442 139.9 L443 140.3 L444 140.1 L445 140.2 L446 139.9 L447 140.2 L448 139.9 L449 139.5 L450 139.4 L451 139.3 L452 139.5 L453 139.1 L454 139.4 L455 139.0 L456 139.3 L457 139.2 L458 139.2 L459 139.4 L460 138.5 L461 139.2 L462 138.8 L463 138.8 L464 138.9 L465 139.0 L466 138.5 L467 138.4 L468 138.9 L469 138.0 L470 138.4 L471 138.4 L472 137.8 L473 138.2 L474 138.2 L475 138.4 L476 137.8 L477 138.3 L478 137.8 L479 137.7 L480 138.0 L481 137.2 L482 137.7 L483 137.6 L484 137.2 L485 137.6 L486 137.1 L487 137.2 L488 137.1 L489 137.3 L490 136.7 L491 136.9 L492 136.8 L493 136.8 L494 137.0 L495 136.5 L496 136.9 L497 136.4 L498 136.5 L499 136.2 L500 136.3 L501 136.7 L502 136.3 L503 136.4 L504 135.9 L505 135.9 L506 135.8 L507 136.0 L508 135.9 L509 136.0 L510 135.3" fill="none" stroke="#00ff00" stroke-width="1.3"/><rect x="75" y="174" width="2" height="13" fill="#00ff00"/><rect x="75" y="186" width="1" height="15" fill="#00ff00"/><rect x="508" y="134" width="3" height="3" fill="#00ff00"/><rect x="61" y="223" width="470" height="132" fill="#008000"/><rect x="59" y="223" width="471" height="1" fill="#0000ff"/><rect x="60" y="237" width="470" height="1" fill="#000080"/><rect x="59" y="250" width="471" height="1" fill="#0000ff"/><rect x="60" y="263" width="470" height="1" fill="#000080"/><rect x="59" y="276" width="471" height="1" fill="#0000ff"/><rect x="60" y="289" width="470" height="1" fill="#000080"/><rect x="59" y="302" width="471" height="1" fill="#0000ff"/><rect x="60" y="315" width="470" height="1" fill="#000080"/><rect x="59" y="328" width="471" height="1" fill="#0000ff"/><rect x="60" y="341" width="470" height="1" fill="#000080"/><rect x="59" y="354" width="471" height="1" fill="#0000ff"/><rect x="72" y="224" width="1" height="132" fill="#000080"/><rect x="82" y="224" width="1" height="132" fill="#000080"/><rect x="93" y="224" width="1" height="132" fill="#000080"/><rect x="103" y="224" width="1" height="132" fill="#000080"/><rect x="113" y="224" width="1" height="132" fill="#0000ff"/><rect x="124" y="224" width="1" height="132" fill="#000080"/><rect x="134" y="224" width="1" height="132" fill="#000080"/><rect x="144" y="224" width="1" height="132" fill="#000080"/><rect x="155" y="224" width="1" height="132" fill="#000080"/><rect x="165" y="224" width="1" height="132" fill="#0000ff"/><rect x="176" y="224" width="1" height="132" fill="#000080"/><rect x="186" y="224" width="1" height="132" fill="#000080"/><rect x="196" y="224" width="1" height="132" fill="#000080"/><rect x="207" y="224" width="1" height="132" fill="#000080"/><rect x="217" y="224" width="1" height="132" fill="#0000ff"/><rect x="227" y="224" width="1" height="132" fill="#000080"/><rect x="238" y="224" width="1" height="132" fill="#000080"/><rect x="248" y="224" width="1" height="132" fill="#000080"/><rect x="259" y="224" width="1" height="132" fill="#000080"/><rect x="269" y="224" width="1" height="132" fill="#0000ff"/><rect x="279" y="224" width="1" height="132" fill="#000080"/><rect x="290" y="224" width="1" height="132" fill="#000080"/><rect x="300" y="224" width="1" height="132" fill="#000080"/><rect x="311" y="224" width="1" height="132" fill="#000080"/><rect x="321" y="224" width="1" height="132" fill="#0000ff"/><rect x="331" y="224" width="1" height="132" fill="#000080"/><rect x="342" y="224" width="1" height="132" fill="#000080"/><rect x="352" y="224" width="1" height="132" fill="#000080"/><rect x="362" y="224" width="1" height="132" fill="#000080"/><rect x="373" y="224" width="1" height="132" fill="#0000ff"/><rect x="383" y="224" width="1" height="132" fill="#000080"/><rect x="394" y="224" width="1" height="132" fill="#000080"/><rect x="404" y="224" width="1" height="132" fill="#000080"/><rect x="414" y="224" width="1" height="132" fill="#000080"/><rect x="425" y="224" width="1" height="132" fill="#0000ff"/><rect x="435" y="224" width="1" height="132" fill="#000080"/><rect x="445" y="224" width="1" height="132" fill="#000080"/><rect x="456" y="224" width="1" height="132" fill="#000080"/><rect x="466" y="224" width="1" height="132" fill="#000080"/><rect x="477" y="224" width="1" height="132" fill="#0000ff"/><rect x="487" y="224" width="1" height="132" fill="#000080"/><rect x="497" y="224" width="1" height="132" fill="#000080"/><rect x="508" y="224" width="1" height="132" fill="#000080"/><rect x="518" y="224" width="1" height="132" fill="#000080"/><rect x="101" y="315" width="1" height="40" fill="#ffff00"/><rect x="112" y="302" width="1" height="53" fill="#ffff00"/><rect x="113" y="288" width="1" height="67" fill="#ffff00"/><rect x="121" y="341" width="1" height="14" fill="#ffff00"/><rect x="126" y="341" width="1" height="14" fill="#ffff00"/><rect x="130" y="302" width="1" height="53" fill="#ffff00"/><rect x="131" y="288" width="1" height="67" fill="#ffff00"/><rect x="141" y="341" width="1" height="14" fill="#ffff00"/><rect x="142" y="341" width="1" height="14" fill="#ffff00"/><rect x="151" y="341" width="1" height="14" fill="#ffff00"/><rect x="161" y="341" width="1" height="14" fill="#ffff00"/><rect x="171" y="341" width="1" height="14" fill="#ffff00"/><rect x="179" y="341" width="1" height="14" fill="#ffff00"/><rect x="180" y="328" width="1" height="27" fill="#ffff00"/><rect x="181" y="341" width="1" height="14" fill="#ffff00"/><rect x="182" y="341" width="1" height="14" fill="#ffff00"/><rect x="200" y="341" width="1" height="14" fill="#ffff00"/><rect x="203" y="315" width="1" height="40" fill="#ffff00"/><rect x="211" y="315" width="1" height="40" fill="#ffff00"/><rect x="220" y="341" width="1" height="14" fill="#ffff00"/><rect x="240" y="341" width="1" height="14" fill="#ffff00"/><rect x="244" y="341" width="1" height="14" fill="#ffff00"/><rect x="245" y="328" width="1" height="27" fill="#ffff00"/><rect x="251" y="302" width="1" height="53" fill="#ffff00"/><rect x="260" y="341" width="1" height="14" fill="#ffff00"/><rect x="262" y="288" width="1" height="67" fill="#ffff00"/><rect x="264" y="315" width="1" height="40" fill="#ffff00"/><rect x="267" y="341" width="1" height="14" fill="#ffff00"/><rect x="279" y="341" width="1" height="14" fill="#ffff00"/><rect x="296" y="341" width="1" height="14" fill="#ffff00"/><rect x="297" y="328" width="1" height="27" fill="#ffff00"/><rect x="298" y="341" width="1" height="14" fill="#ffff00"/><rect x="299" y="341" width="1" height="14" fill="#ffff00"/><rect x="300" y="315" width="1" height="40" fill="#ffff00"/><rect x="319" y="341" width="1" height="14" fill="#ffff00"/><rect x="321" y="315" width="1" height="40" fill="#ffff00"/><rect x="322" y="302" width="1" height="53" fill="#ffff00"/><rect x="324" y="315" width="1" height="40" fill="#ffff00"/><rect x="327" y="341" width="1" height="14" fill="#ffff00"/><rect x="339" y="341" width="1" height="14" fill="#ffff00"/><rect x="347" y="341" width="1" height="14" fill="#ffff00"/><rect x="349" y="275" width="1" height="80" fill="#ffff00"/><rect x="350" y="341" width="1" height="14" fill="#ffff00"/><rect x="352" y="341" width="1" height="14" fill="#ffff00"/><rect x="353" y="341" width="1" height="14" fill="#ffff00"/><rect x="355" y="328" width="1" height="27" fill="#ffff00"/><rect x="359" y="341" width="1" height="14" fill="#ffff00"/><rect x="367" y="341" width="1" height="14" fill="#ffff00"/><rect x="375" y="328" width="1" height="27" fill="#ffff00"/><rect x="378" y="341" width="1" height="14" fill="#ffff00"/><rect x="380" y="341" width="1" height="14" fill="#ffff00"/><rect x="381" y="341" width="1" height="14" fill="#ffff00"/><rect x="383" y="341" width="1" height="14" fill="#ffff00"/><rect x="387" y="341" width="1" height="14" fill="#ffff00"/><rect x="388" y="341" width="1" height="14" fill="#ffff00"/><rect x="390" y="341" width="1" height="14" fill="#ffff00"/><rect x="393" y="341" width="1" height="14" fill="#ffff00"/><rect x="395" y="315" width="1" height="40" fill="#ffff00"/><rect x="396" y="341" width="1" height="14" fill="#ffff00"/><rect x="408" y="315" width="1" height="40" fill="#ffff00"/><rect x="409" y="302" width="1" height="53" fill="#ffff00"/><rect x="410" y="302" width="1" height="53" fill="#ffff00"/><rect x="411" y="302" width="1" height="53" fill="#ffff00"/><rect x="412" y="315" width="1" height="40" fill="#ffff00"/><rect x="414" y="341" width="1" height="14" fill="#ffff00"/><rect x="418" y="328" width="1" height="27" fill="#ffff00"/><rect x="421" y="341" width="1" height="14" fill="#ffff00"/><rect x="422" y="341" width="1" height="14" fill="#ffff00"/><rect x="426" y="341" width="1" height="14" fill="#ffff00"/><rect x="427" y="341" width="1" height="14" fill="#ffff00"/><rect x="429" y="341" width="1" height="14" fill="#ffff00"/><rect x="430" y="341" width="1" height="14" fill="#ffff00"/><rect x="431" y="341" width="1" height="14" fill="#ffff00"/><rect x="432" y="341" width="1" height="14" fill="#ffff00"/><rect x="433" y="288" width="1" height="67" fill="#ffff00"/><rect x="437" y="341" width="1" height="14" fill="#ffff00"/><rect x="443" y="328" width="1" height="27" fill="#ffff00"/><rect x="445" y="315" width="1" height="40" fill="#ffff00"/><rect x="448" y="341" width="1" height="14" fill="#ffff00"/><rect x="450" y="315" width="1" height="40" fill="#ffff00"/><rect x="451" y="341" width="1" height="14" fill="#ffff00"/><rect x="452" y="328" width="1" height="27" fill="#ffff00"/><rect x="453" y="341" width="1" height="14" fill="#ffff00"/><rect x="454" y="328" width="1" height="27" fill="#ffff00"/><rect x="455" y="341" width="1" height="14" fill="#ffff00"/><rect x="456" y="315" width="1" height="40" fill="#ffff00"/><rect x="457" y="341" width="1" height="14" fill="#ffff00"/><rect x="458" y="341" width="1" height="14" fill="#ffff00"/><rect x="459" y="341" width="1" height="14" fill="#ffff00"/><rect x="467" y="341" width="1" height="14" fill="#ffff00"/><rect x="470" y="341" width="1" height="14" fill="#ffff00"/><rect x="471" y="341" width="1" height="14" fill="#ffff00"/><rect x="472" y="328" width="1" height="27" fill="#ffff00"/><rect x="474" y="341" width="1" height="14" fill="#ffff00"/><rect x="475" y="341" width="1" height="14" fill="#ffff00"/><rect x="476" y="328" width="1" height="27" fill="#ffff00"/><rect x="477" y="341" width="1" height="14" fill="#ffff00"/><rect x="479" y="328" width="1" height="27" fill="#ffff00"/><rect x="481" y="302" width="1" height="53" fill="#ffff00"/><rect x="482" y="341" width="1" height="14" fill="#ffff00"/><rect x="483" y="341" width="1" height="14" fill="#ffff00"/><rect x="484" y="341" width="1" height="14" fill="#ffff00"/><rect x="485" y="341" width="1" height="14" fill="#ffff00"/><rect x="486" y="341" width="1" height="14" fill="#ffff00"/><rect x="487" y="315" width="1" height="40" fill="#ffff00"/><rect x="488" y="328" width="1" height="27" fill="#ffff00"/><rect x="489" y="328" width="1" height="27" fill="#ffff00"/><rect x="490" y="341" width="1" height="14" fill="#ffff00"/><rect x="491" y="341" width="1" height="14" fill="#ffff00"/><rect x="492" y="341" width="1" height="14" fill="#ffff00"/><rect x="493" y="341" width="1" height="14" fill="#ffff00"/><rect x="494" y="341" width="1" height="14" fill="#ffff00"/><rect x="495" y="341" width="1" height="14" fill="#ffff00"/><rect x="496" y="315" width="1" height="40" fill="#ffff00"/><rect x="497" y="302" width="1" height="53" fill="#ffff00"/><rect x="498" y="315" width="1" height="40" fill="#ffff00"/><rect x="499" y="341" width="1" height="14" fill="#ffff00"/><rect x="500" y="328" width="1" height="27" fill="#ffff00"/><rect x="501" y="315" width="1" height="40" fill="#ffff00"/><rect x="502" y="328" width="1" height="27" fill="#ffff00"/><rect x="503" y="302" width="1" height="53" fill="#ffff00"/><rect x="504" y="302" width="1" height="53" fill="#ffff00"/><rect x="505" y="315" width="1" height="40" fill="#ffff00"/><rect x="506" y="315" width="1" height="40" fill="#ffff00"/><rect x="507" y="328" width="1" height="27" fill="#ffff00"/><rect x="508" y="315" width="1" height="40" fill="#ffff00"/><rect x="509" y="302" width="1" height="53" fill="#ffff00"/><rect x="510" y="315" width="1" height="40" fill="#ffff00"/><rect x="511" y="302" width="1" height="53" fill="#ffff00"/><rect x="512" y="315" width="1" height="40" fill="#ffff00"/><rect x="513" y="224" width="1" height="131" fill="#d8d8d8"/><rect x="63" y="301" width="1" height="2" fill="#ff00ff"/><rect x="64" y="299" width="1" height="3" fill="#ff00ff"/><rect x="65" y="299" width="1" height="3" fill="#ff00ff"/><rect x="66" y="300" width="1" height="2" fill="#ff00ff"/><rect x="67" y="300" width="1" height="2" fill="#ff00ff"/><rect x="68" y="300" width="1" height="2" fill="#ff00ff"/><rect x="69" y="300" width="1" height="2" fill="#ff00ff"/><rect x="70" y="300" width="1" height="2" fill="#ff00ff"/><rect x="71" y="299" width="1" height="2" fill="#ff00ff"/><rect x="72" y="299" width="1" height="2" fill="#ff00ff"/><rect x="73" y="295" width="1" height="6" fill="#ff00ff"/><rect x="74" y="295" width="1" height="7" fill="#ff00ff"/><rect x="75" y="300" width="1" height="2" fill="#ff00ff"/><rect x="76" y="300" width="1" height="2" fill="#ff00ff"/><rect x="77" y="300" width="1" height="2" fill="#ff00ff"/><rect x="78" y="299" width="1" height="2" fill="#ff00ff"/><rect x="79" y="299" width="1" height="2" fill="#ff00ff"/><rect x="80" y="299" width="1" height="2" fill="#ff00ff"/><rect x="81" y="298" width="1" height="3" fill="#ff00ff"/><rect x="82" y="298" width="1" height="3" fill="#ff00ff"/><rect x="83" y="300" width="1" height="2" fill="#ff00ff"/><rect x="84" y="299" width="1" height="2" fill="#ff00ff"/><rect x="85" y="299" width="1" height="2" fill="#ff00ff"/><rect x="86" y="300" width="1" height="3" fill="#ff00ff"/><rect x="87" y="301" width="1" height="2" fill="#ff00ff"/><rect x="88" y="296" width="1" height="6" fill="#ff00ff"/><rect x="89" y="296" width="1" height="3" fill="#ff00ff"/><rect x="90" y="298" width="1" height="2" fill="#ff00ff"/><rect x="91" y="298" width="1" height="2" fill="#ff00ff"/><rect x="92" y="298" width="1" height="3" fill="#ff00ff"/><rect x="93" y="299" width="1" height="2" fill="#ff00ff"/><rect x="94" y="299" width="1" height="3" fill="#ff00ff"/><rect x="95" y="301" width="1" height="2" fill="#ff00ff"/><rect x="96" y="301" width="1" height="2" fill="#ff00ff"/><rect x="97" y="301" width="1" height="2" fill="#ff00ff"/><rect x="98" y="301" width="1" height="2" fill="#ff00ff"/><rect x="99" y="301" width="1" height="2" fill="#ff00ff"/><rect x="100" y="299" width="1" height="3" fill="#ff00ff"/><rect x="101" y="299" width="1" height="2" fill="#ff00ff"/><rect x="102" y="300" width="1" height="4" fill="#ff00ff"/><rect x="103" y="299" width="1" height="5" fill="#ff00ff"/><rect x="104" y="299" width="1" height="2" fill="#ff00ff"/><rect x="105" y="300" width="1" height="4" fill="#ff00ff"/><rect x="106" y="299" width="1" height="5" fill="#ff00ff"/><rect x="107" y="299" width="1" height="2" fill="#ff00ff"/><rect x="108" y="300" width="1" height="2" fill="#ff00ff"/><rect x="109" y="300" width="1" height="2" fill="#ff00ff"/><rect x="110" y="300" width="1" height="2" fill="#ff00ff"/><rect x="111" y="298" width="1" height="3" fill="#ff00ff"/><rect x="112" y="298" width="1" height="4" fill="#ff00ff"/><rect x="113" y="299" width="1" height="3" fill="#ff00ff"/><rect x="114" y="299" width="1" height="4" fill="#ff00ff"/><rect x="115" y="300" width="1" height="3" fill="#ff00ff"/><rect x="116" y="300" width="1" height="2" fill="#ff00ff"/><rect x="117" y="300" width="1" height="2" fill="#ff00ff"/><rect x="118" y="300" width="1" height="2" fill="#ff00ff"/><rect x="119" y="300" width="1" height="2" fill="#ff00ff"/><rect x="120" y="298" width="1" height="4" fill="#ff00ff"/><rect x="121" y="298" width="1" height="3" fill="#ff00ff"/><rect x="122" y="300" width="1" height="2" fill="#ff00ff"/><rect x="123" y="298" width="1" height="4" fill="#ff00ff"/><rect x="124" y="298" width="1" height="4" fill="#ff00ff"/><rect x="125" y="300" width="1" height="2" fill="#ff00ff"/><rect x="126" y="300" width="1" height="2" fill="#ff00ff"/><rect x="127" y="301" width="1" height="2" fill="#ff00ff"/><rect x="128" y="300" width="1" height="2" fill="#ff00ff"/><rect x="129" y="300" width="1" height="4" fill="#ff00ff"/><rect x="130" y="301" width="1" height="3" fill="#ff00ff"/><rect x="131" y="300" width="1" height="2" fill="#ff00ff"/><rect x="132" y="298" width="1" height="3" fill="#ff00ff"/><rect x="133" y="298" width="1" height="4" fill="#ff00ff"/><rect x="134" y="301" width="1" height="2" fill="#ff00ff"/><rect x="135" y="301" width="1" height="2" fill="#ff00ff"/><rect x="136" y="300" width="1" height="2" fill="#ff00ff"/><rect x="137" y="300" width="1" height="2" fill="#ff00ff"/><rect x="138" y="300" width="1" height="2" fill="#ff00ff"/><rect x="139" y="297" width="1" height="4" fill="#ff00ff"/><rect x="140" y="297" width="1" height="5" fill="#ff00ff"/><rect x="141" y="300" width="1" height="2" fill="#ff00ff"/><rect x="142" y="297" width="1" height="4" fill="#ff00ff"/><rect x="143" y="297" width="1" height="6" fill="#ff00ff"/><rect x="144" y="299" width="1" height="4" fill="#ff00ff"/><rect x="145" y="299" width="1" height="4" fill="#ff00ff"/><rect x="146" y="300" width="1" height="3" fill="#ff00ff"/><rect x="147" y="300" width="1" height="3" fill="#ff00ff"/><rect x="148" y="301" width="1" height="2" fill="#ff00ff"/><rect x="149" y="300" width="1" height="2" fill="#ff00ff"/><rect x="150" y="300" width="1" height="2" fill="#ff00ff"/><rect x="151" y="301" width="1" height="2" fill="#ff00ff"/><rect x="152" y="301" width="1" height="2" fill="#ff00ff"/><rect x="153" y="297" width="1" height="5" fill="#ff00ff"/><rect x="154" y="296" width="1" height="2" fill="#ff00ff"/><rect x="155" y="296" width="1" height="5" fill="#ff00ff"/><rect x="156" y="300" width="1" height="2" fill="#ff00ff"/><rect x="157" y="300" width="1" height="3" fill="#ff00ff"/><rect x="158" y="302" width="1" height="2" fill="#ff00ff"/><rect x="159" y="299" width="1" height="5" fill="#ff00ff"/><rect x="160" y="299" width="1" height="3" fill="#ff00ff"/><rect x="161" y="301" width="1" height="2" fill="#ff00ff"/><rect x="162" y="301" width="1" height="3" fill="#ff00ff"/><rect x="163" y="302" width="1" height="2" fill="#ff00ff"/><rect x="164" y="299" width="1" height="4" fill="#ff00ff"/><rect x="165" y="299" width="1" height="2" fill="#ff00ff"/><rect x="166" y="300" width="1" height="2" fill="#ff00ff"/><rect x="167" y="299" width="1" height="3" fill="#ff00ff"/><rect x="168" y="299" width="1" height="3" fill="#ff00ff"/><rect x="169" y="299" width="1" height="3" fill="#ff00ff"/><rect x="170" y="299" width="1" height="3" fill="#ff00ff"/><rect x="171" y="301" width="1" height="2" fill="#ff00ff"/><rect x="172" y="300" width="1" height="2" fill="#ff00ff"/><rect x="173" y="299" width="1" height="2" fill="#ff00ff"/><rect x="174" y="299" width="1" height="2" fill="#ff00ff"/><rect x="175" y="299" width="1" height="2" fill="#ff00ff"/><rect x="176" y="299" width="1" height="2" fill="#ff00ff"/><rect x="177" y="298" width="1" height="2" fill="#ff00ff"/><rect x="178" y="298" width="1" height="5" fill="#ff00ff"/><rect x="179" y="299" width="1" height="4" fill="#ff00ff"/><rect x="180" y="299" width="1" height="3" fill="#ff00ff"/><rect x="181" y="299" width="1" height="3" fill="#ff00ff"/><rect x="182" y="299" width="1" height="2" fill="#ff00ff"/><rect x="183" y="299" width="1" height="3" fill="#ff00ff"/><rect x="184" y="300" width="1" height="2" fill="#ff00ff"/><rect x="185" y="300" width="1" height="2" fill="#ff00ff"/><rect x="186" y="299" width="1" height="3" fill="#ff00ff"/><rect x="187" y="299" width="1" height="2" fill="#ff00ff"/><rect x="188" y="299" width="1" height="5" fill="#ff00ff"/><rect x="189" y="299" width="1" height="5" fill="#ff00ff"/><rect x="190" y="299" width="1" height="2" fill="#ff00ff"/><rect x="191" y="299" width="1" height="3" fill="#ff00ff"/><rect x="192" y="299" width="1" height="3" fill="#ff00ff"/><rect x="193" y="299" width="1" height="2" fill="#ff00ff"/><rect x="194" y="299" width="1" height="2" fill="#ff00ff"/><rect x="195" y="299" width="1" height="2" fill="#ff00ff"/><rect x="196" y="299" width="1" height="3" fill="#ff00ff"/><rect x="197" y="299" width="1" height="3" fill="#ff00ff"/><rect x="198" y="299" width="1" height="2" fill="#ff00ff"/><rect x="199" y="299" width="1" height="4" fill="#ff00ff"/><rect x="200" y="300" width="1" height="3" fill="#ff00ff"/><rect x="201" y="300" width="1" height="4" fill="#ff00ff"/><rect x="202" y="300" width="1" height="4" fill="#ff00ff"/><rect x="203" y="299" width="1" height="2" fill="#ff00ff"/><rect x="204" y="296" width="1" height="4" fill="#ff00ff"/><rect x="205" y="296" width="1" height="6" fill="#ff00ff"/><rect x="206" y="299" width="1" height="3" fill="#ff00ff"/><rect x="207" y="299" width="1" height="4" fill="#ff00ff"/><rect x="208" y="301" width="1" height="2" fill="#ff00ff"/><rect x="209" y="298" width="1" height="4" fill="#ff00ff"/><rect x="210" y="298" width="1" height="2" fill="#ff00ff"/><rect x="211" y="299" width="1" height="2" fill="#ff00ff"/><rect x="212" y="299" width="1" height="2" fill="#ff00ff"/><rect x="213" y="299" width="1" height="3" fill="#ff00ff"/><rect x="214" y="297" width="1" height="5" fill="#ff00ff"/><rect x="215" y="297" width="1" height="5" fill="#ff00ff"/><rect x="216" y="301" width="1" height="3" fill="#ff00ff"/><rect x="217" y="300" width="1" height="4" fill="#ff00ff"/><rect x="218" y="300" width="1" height="2" fill="#ff00ff"/><rect x="219" y="299" width="1" height="3" fill="#ff00ff"/><rect x="220" y="299" width="1" height="2" fill="#ff00ff"/><rect x="221" y="300" width="1" height="3" fill="#ff00ff"/><rect x="222" y="299" width="1" height="4" fill="#ff00ff"/><rect x="223" y="299" width="1" height="3" fill="#ff00ff"/><rect x="224" y="300" width="1" height="2" fill="#ff00ff"/><rect x="225" y="299" width="1" height="2" fill="#ff00ff"/><rect x="226" y="299" width="1" height="3" fill="#ff00ff"/><rect x="227" y="300" width="1" height="2" fill="#ff00ff"/><rect x="228" y="300" width="1" height="2" fill="#ff00ff"/><rect x="229" y="299" width="1" height="2" fill="#ff00ff"/><rect x="230" y="299" width="1" height="4" fill="#ff00ff"/><rect x="231" y="300" width="1" height="3" fill="#ff00ff"/><rect x="232" y="300" width="1" height="5" fill="#ff00ff"/><rect x="233" y="297" width="1" height="8" fill="#ff00ff"/><rect x="234" y="297" width="1" height="3" fill="#ff00ff"/><rect x="235" y="299" width="1" height="2" fill="#ff00ff"/><rect x="236" y="300" width="1" height="2" fill="#ff00ff"/><rect x="237" y="300" width="1" height="2" fill="#ff00ff"/><rect x="238" y="301" width="1" height="4" fill="#ff00ff"/><rect x="239" y="298" width="1" height="7" fill="#ff00ff"/><rect x="240" y="298" width="1" height="3" fill="#ff00ff"/><rect x="241" y="299" width="1" height="2" fill="#ff00ff"/><rect x="242" y="299" width="1" height="2" fill="#ff00ff"/><rect x="243" y="299" width="1" height="4" fill="#ff00ff"/><rect x="244" y="302" width="1" height="2" fill="#ff00ff"/><rect x="245" y="302" width="1" height="2" fill="#ff00ff"/><rect x="246" y="300" width="1" height="3" fill="#ff00ff"/><rect x="247" y="300" width="1" height="2" fill="#ff00ff"/><rect x="248" y="300" width="1" height="3" fill="#ff00ff"/><rect x="249" y="300" width="1" height="3" fill="#ff00ff"/><rect x="250" y="300" width="1" height="2" fill="#ff00ff"/><rect x="251" y="300" width="1" height="3" fill="#ff00ff"/><rect x="252" y="302" width="1" height="2" fill="#ff00ff"/><rect x="253" y="302" width="1" height="2" fill="#ff00ff"/><rect x="254" y="302" width="1" height="2" fill="#ff00ff"/><rect x="255" y="300" width="1" height="3" fill="#ff00ff"/><rect x="256" y="300" width="1" height="2" fill="#ff00ff"/><rect x="257" y="300" width="1" height="2" fill="#ff00ff"/><rect x="258" y="298" width="1" height="3" fill="#ff00ff"/><rect x="259" y="298" width="1" height="5" fill="#ff00ff"/><rect x="260" y="302" width="1" height="2" fill="#ff00ff"/><rect x="261" y="301" width="1" height="2" fill="#ff00ff"/><rect x="262" y="301" width="1" height="3" fill="#ff00ff"/><rect x="263" y="300" width="1" height="4" fill="#ff00ff"/><rect x="264" y="300" width="1" height="2" fill="#ff00ff"/><rect x="265" y="300" width="1" height="3" fill="#ff00ff"/><rect x="266" y="300" width="1" height="3" fill="#ff00ff"/><rect x="267" y="300" width="1" height="2" fill="#ff00ff"/><rect x="268" y="300" width="1" height="2" fill="#ff00ff"/><rect x="269" y="300" width="1" height="3" fill="#ff00ff"/><rect x="270" y="302" width="1" height="2" fill="#ff00ff"/><rect x="271" y="300" width="1" height="3" fill="#ff00ff"/><rect x="272" y="298" width="1" height="3" fill="#ff00ff"/><rect x="273" y="298" width="1" height="2" fill="#ff00ff"/><rect x="274" y="299" width="1" height="2" fill="#ff00ff"/><rect x="275" y="300" width="1" height="2" fill="#ff00ff"/><rect x="276" y="300" width="1" height="3" fill="#ff00ff"/><rect x="277" y="301" width="1" height="2" fill="#ff00ff"/><rect x="278" y="299" width="1" height="3" fill="#ff00ff"/><rect x="279" y="299" width="1" height="2" fill="#ff00ff"/><rect x="280" y="300" width="1" height="2" fill="#ff00ff"/><rect x="281" y="300" width="1" height="2" fill="#ff00ff"/><rect x="282" y="300" width="1" height="2" fill="#ff00ff"/><rect x="283" y="300" width="1" height="2" fill="#ff00ff"/><rect x="284" y="299" width="1" height="2" fill="#ff00ff"/><rect x="285" y="299" width="1" height="4" fill="#ff00ff"/><rect x="286" y="301" width="1" height="2" fill="#ff00ff"/><rect x="287" y="300" width="1" height="2" fill="#ff00ff"/><rect x="288" y="300" width="1" height="2" fill="#ff00ff"/><rect x="289" y="300" width="1" height="3" fill="#ff00ff"/><rect x="290" y="299" width="1" height="4" fill="#ff00ff"/><rect x="291" y="299" width="1" height="2" fill="#ff00ff"/><rect x="292" y="299" width="1" height="2" fill="#ff00ff"/><rect x="293" y="299" width="1" height="4" fill="#ff00ff"/><rect x="294" y="299" width="1" height="4" fill="#ff00ff"/><rect x="295" y="299" width="1" height="2" fill="#ff00ff"/><rect x="296" y="300" width="1" height="2" fill="#ff00ff"/><rect x="297" y="301" width="1" height="2" fill="#ff00ff"/><rect x="298" y="301" width="1" height="2" fill="#ff00ff"/><rect x="299" y="301" width="1" height="2" fill="#ff00ff"/><rect x="300" y="301" width="1" height="2" fill="#ff00ff"/><rect x="301" y="301" width="1" height="4" fill="#ff00ff"/><rect x="302" y="299" width="1" height="6" fill="#ff00ff"/><rect x="303" y="299" width="1" height="3" fill="#ff00ff"/><rect x="304" y="301" width="1" height="2" fill="#ff00ff"/><rect x="305" y="300" width="1" height="3" fill="#ff00ff"/><rect x="306" y="300" width="1" height="2" fill="#ff00ff"/><rect x="307" y="300" width="1" height="2" fill="#ff00ff"/><rect x="308" y="300" width="1" height="2" fill="#ff00ff"/><rect x="309" y="299" width="1" height="2" fill="#ff00ff"/><rect x="310" y="299" width="1" height="2" fill="#ff00ff"/><rect x="311" y="299" width="1" height="2" fill="#ff00ff"/><rect x="312" y="299" width="1" height="3" fill="#ff00ff"/><rect x="313" y="298" width="1" height="4" fill="#ff00ff"/><rect x="314" y="298" width="1" height="2" fill="#ff00ff"/><rect x="315" y="298" width="1" height="6" fill="#ff00ff"/><rect x="316" y="299" width="1" height="5" fill="#ff00ff"/><rect x="317" y="299" width="1" height="2" fill="#ff00ff"/><rect x="318" y="298" width="1" height="3" fill="#ff00ff"/><rect x="319" y="297" width="1" height="2" fill="#ff00ff"/><rect x="320" y="297" width="1" height="3" fill="#ff00ff"/><rect x="321" y="299" width="1" height="2" fill="#ff00ff"/><rect x="322" y="299" width="1" height="2" fill="#ff00ff"/><rect x="323" y="299" width="1" height="2" fill="#ff00ff"/><rect x="324" y="299" width="1" height="2" fill="#ff00ff"/><rect x="325" y="298" width="1" height="2" fill="#ff00ff"/><rect x="326" y="298" width="1" height="2" fill="#ff00ff"/><rect x="327" y="298" width="1" height="2" fill="#ff00ff"/><rect x="328" y="297" width="1" height="3" fill="#ff00ff"/><rect x="329" y="297" width="1" height="2" fill="#ff00ff"/><rect x="330" y="298" width="1" height="2" fill="#ff00ff"/><rect x="331" y="298" width="1" height="3" fill="#ff00ff"/><rect x="332" y="298" width="1" height="3" fill="#ff00ff"/><rect x="333" y="298" width="1" height="3" fill="#ff00ff"/><rect x="334" y="298" width="1" height="3" fill="#ff00ff"/><rect x="335" y="296" width="1" height="3" fill="#ff00ff"/><rect x="336" y="296" width="1" height="5" fill="#ff00ff"/><rect x="337" y="300" width="1" height="2" fill="#ff00ff"/><rect x="338" y="298" width="1" height="3" fill="#ff00ff"/><rect x="339" y="298" width="1" height="3" fill="#ff00ff"/><rect x="340" y="295" width="1" height="6" fill="#ff00ff"/><rect x="341" y="295" width="1" height="3" fill="#ff00ff"/><rect x="342" y="296" width="1" height="2" fill="#ff00ff"/><rect x="343" y="296" width="1" height="3" fill="#ff00ff"/><rect x="344" y="298" width="1" height="3" fill="#ff00ff"/><rect x="345" y="295" width="1" height="6" fill="#ff00ff"/><rect x="346" y="295" width="1" height="4" fill="#ff00ff"/><rect x="347" y="296" width="1" height="3" fill="#ff00ff"/><rect x="348" y="296" width="1" height="3" fill="#ff00ff"/><rect x="349" y="297" width="1" height="2" fill="#ff00ff"/><rect x="350" y="297" width="1" height="2" fill="#ff00ff"/><rect x="351" y="297" width="1" height="2" fill="#ff00ff"/><rect x="352" y="297" width="1" height="3" fill="#ff00ff"/><rect x="353" y="293" width="1" height="7" fill="#ff00ff"/><rect x="354" y="293" width="1" height="3" fill="#ff00ff"/><rect x="355" y="294" width="1" height="2" fill="#ff00ff"/><rect x="356" y="294" width="1" height="5" fill="#ff00ff"/><rect x="357" y="294" width="1" height="5" fill="#ff00ff"/><rect x="358" y="294" width="1" height="4" fill="#ff00ff"/><rect x="359" y="297" width="1" height="2" fill="#ff00ff"/><rect x="360" y="294" width="1" height="4" fill="#ff00ff"/><rect x="361" y="294" width="1" height="2" fill="#ff00ff"/><rect x="362" y="294" width="1" height="3" fill="#ff00ff"/><rect x="363" y="295" width="1" height="2" fill="#ff00ff"/><rect x="364" y="293" width="1" height="3" fill="#ff00ff"/><rect x="365" y="293" width="1" height="4" fill="#ff00ff"/><rect x="366" y="295" width="1" height="2" fill="#ff00ff"/><rect x="367" y="295" width="1" height="3" fill="#ff00ff"/><rect x="368" y="297" width="1" height="2" fill="#ff00ff"/><rect x="369" y="297" width="1" height="2" fill="#ff00ff"/><rect x="370" y="294" width="1" height="4" fill="#ff00ff"/><rect x="371" y="294" width="1" height="5" fill="#ff00ff"/><rect x="372" y="297" width="1" height="2" fill="#ff00ff"/><rect x="373" y="295" width="1" height="3" fill="#ff00ff"/><rect x="374" y="294" width="1" height="2" fill="#ff00ff"/><rect x="375" y="294" width="1" height="4" fill="#ff00ff"/><rect x="376" y="297" width="1" height="2" fill="#ff00ff"/><rect x="377" y="293" width="1" height="5" fill="#ff00ff"/><rect x="378" y="293" width="1" height="2" fill="#ff00ff"/><rect x="379" y="293" width="1" height="2" fill="#ff00ff"/><rect x="380" y="293" width="1" height="2" fill="#ff00ff"/><rect x="381" y="293" width="1" height="2" fill="#ff00ff"/><rect x="382" y="294" width="1" height="2" fill="#ff00ff"/><rect x="383" y="294" width="1" height="2" fill="#ff00ff"/><rect x="384" y="293" width="1" height="2" fill="#ff00ff"/><rect x="385" y="293" width="1" height="3" fill="#ff00ff"/><rect x="386" y="295" width="1" height="2" fill="#ff00ff"/><rect x="387" y="293" width="1" height="4" fill="#ff00ff"/><rect x="388" y="293" width="1" height="4" fill="#ff00ff"/><rect x="389" y="296" width="1" height="2" fill="#ff00ff"/><rect x="390" y="293" width="1" height="5" fill="#ff00ff"/><rect x="391" y="293" width="1" height="4" fill="#ff00ff"/><rect x="392" y="296" width="1" height="5" fill="#ff00ff"/><rect x="393" y="295" width="1" height="6" fill="#ff00ff"/><rect x="394" y="295" width="1" height="2" fill="#ff00ff"/><rect x="395" y="294" width="1" height="3" fill="#ff00ff"/><rect x="396" y="294" width="1" height="2" fill="#ff00ff"/><rect x="397" y="293" width="1" height="3" fill="#ff00ff"/><rect x="398" y="293" width="1" height="2" fill="#ff00ff"/><rect x="399" y="293" width="1" height="2" fill="#ff00ff"/><rect x="400" y="293" width="1" height="3" fill="#ff00ff"/><rect x="401" y="295" width="1" height="2" fill="#ff00ff"/><rect x="402" y="295" width="1" height="2" fill="#ff00ff"/><rect x="403" y="294" width="1" height="2" fill="#ff00ff"/><rect x="404" y="294" width="1" height="2" fill="#ff00ff"/><rect x="405" y="294" width="1" height="2" fill="#ff00ff"/><rect x="406" y="293" width="1" height="2" fill="#ff00ff"/><rect x="407" y="293" width="1" height="2" fill="#ff00ff"/><rect x="408" y="292" width="1" height="3" fill="#ff00ff"/><rect x="409" y="292" width="1" height="4" fill="#ff00ff"/><rect x="410" y="293" width="1" height="3" fill="#ff00ff"/><rect x="411" y="293" width="1" height="5" fill="#ff00ff"/><rect x="412" y="297" width="1" height="2" fill="#ff00ff"/><rect x="413" y="293" width="1" height="5" fill="#ff00ff"/><rect x="414" y="292" width="1" height="2" fill="#ff00ff"/><rect x="415" y="292" width="1" height="4" fill="#ff00ff"/><rect x="416" y="294" width="1" height="2" fill="#ff00ff"/><rect x="417" y="294" width="1" height="2" fill="#ff00ff"/><rect x="418" y="295" width="1" height="2" fill="#ff00ff"/><rect x="419" y="292" width="1" height="5" fill="#ff00ff"/><rect x="420" y="292" width="1" height="6" fill="#ff00ff"/><rect x="421" y="292" width="1" height="6" fill="#ff00ff"/><rect x="422" y="291" width="1" height="2" fill="#ff00ff"/><rect x="423" y="291" width="1" height="2" fill="#ff00ff"/><rect x="424" y="292" width="1" height="6" fill="#ff00ff"/><rect x="425" y="294" width="1" height="4" fill="#ff00ff"/><rect x="426" y="292" width="1" height="3" fill="#ff00ff"/><rect x="427" y="292" width="1" height="3" fill="#ff00ff"/><rect x="428" y="290" width="1" height="5" fill="#ff00ff"/><rect x="429" y="290" width="1" height="5" fill="#ff00ff"/><rect x="430" y="290" width="1" height="5" fill="#ff00ff"/><rect x="431" y="290" width="1" height="2" fill="#ff00ff"/><rect x="432" y="290" width="1" height="2" fill="#ff00ff"/><rect x="433" y="290" width="1" height="2" fill="#ff00ff"/><rect x="434" y="291" width="1" height="5" fill="#ff00ff"/><rect x="435" y="291" width="1" height="5" fill="#ff00ff"/><rect x="436" y="291" width="1" height="3" fill="#ff00ff"/><rect x="437" y="289" width="1" height="5" fill="#ff00ff"/><rect x="438" y="289" width="1" height="3" fill="#ff00ff"/><rect x="439" y="291" width="1" height="2" fill="#ff00ff"/><rect x="440" y="292" width="1" height="2" fill="#ff00ff"/><rect x="441" y="292" width="1" height="2" fill="#ff00ff"/><rect x="442" y="290" width="1" height="3" fill="#ff00ff"/><rect x="443" y="290" width="1" height="5" fill="#ff00ff"/><rect x="444" y="288" width="1" height="7" fill="#ff00ff"/><rect x="445" y="288" width="1" height="5" fill="#ff00ff"/><rect x="446" y="290" width="1" height="3" fill="#ff00ff"/><rect x="447" y="290" width="1" height="2" fill="#ff00ff"/><rect x="448" y="287" width="1" height="4" fill="#ff00ff"/><rect x="449" y="287" width="1" height="2" fill="#ff00ff"/><rect x="450" y="287" width="1" height="2" fill="#ff00ff"/><rect x="451" y="287" width="1" height="4" fill="#ff00ff"/><rect x="452" y="288" width="1" height="3" fill="#ff00ff"/><rect x="453" y="288" width="1" height="2" fill="#ff00ff"/><rect x="454" y="288" width="1" height="2" fill="#ff00ff"/><rect x="455" y="288" width="1" height="4" fill="#ff00ff"/><rect x="456" y="287" width="1" height="5" fill="#ff00ff"/><rect x="457" y="287" width="1" height="2" fill="#ff00ff"/><rect x="458" y="286" width="1" height="3" fill="#ff00ff"/><rect x="459" y="286" width="1" height="3" fill="#ff00ff"/><rect x="460" y="288" width="1" height="2" fill="#ff00ff"/><rect x="461" y="285" width="1" height="5" fill="#ff00ff"/><rect x="462" y="283" width="1" height="3" fill="#ff00ff"/><rect x="463" y="283" width="1" height="5" fill="#ff00ff"/><rect x="464" y="285" width="1" height="3" fill="#ff00ff"/><rect x="465" y="285" width="1" height="2" fill="#ff00ff"/><rect x="466" y="281" width="1" height="6" fill="#ff00ff"/><rect x="467" y="281" width="1" height="9" fill="#ff00ff"/><rect x="468" y="284" width="1" height="6" fill="#ff00ff"/><rect x="469" y="284" width="1" height="5" fill="#ff00ff"/><rect x="470" y="284" width="1" height="5" fill="#ff00ff"/><rect x="471" y="284" width="1" height="3" fill="#ff00ff"/><rect x="472" y="283" width="1" height="4" fill="#ff00ff"/><rect x="473" y="283" width="1" height="4" fill="#ff00ff"/><rect x="474" y="286" width="1" height="2" fill="#ff00ff"/><rect x="475" y="284" width="1" height="4" fill="#ff00ff"/><rect x="476" y="284" width="1" height="2" fill="#ff00ff"/><rect x="477" y="285" width="1" height="2" fill="#ff00ff"/><rect x="478" y="283" width="1" height="4" fill="#ff00ff"/><rect x="479" y="283" width="1" height="4" fill="#ff00ff"/><rect x="480" y="282" width="1" height="5" fill="#ff00ff"/><rect x="481" y="282" width="1" height="5" fill="#ff00ff"/><rect x="482" y="285" width="1" height="2" fill="#ff00ff"/><rect x="483" y="283" width="1" height="3" fill="#ff00ff"/><rect x="484" y="283" width="1" height="2" fill="#ff00ff"/><rect x="485" y="284" width="1" height="2" fill="#ff00ff"/><rect x="486" y="281" width="1" height="5" fill="#ff00ff"/><rect x="487" y="281" width="1" height="4" fill="#ff00ff"/><rect x="488" y="284" width="1" height="2" fill="#ff00ff"/><rect x="489" y="284" width="1" height="2" fill="#ff00ff"/><rect x="490" y="281" width="1" height="5" fill="#ff00ff"/><rect x="491" y="281" width="1" height="4" fill="#ff00ff"/><rect x="492" y="280" width="1" height="5" fill="#ff00ff"/><rect x="493" y="280" width="1" height="2" fill="#ff00ff"/><rect x="494" y="281" width="1" height="3" fill="#ff00ff"/><rect x="495" y="279" width="1" height="5" fill="#ff00ff"/><rect x="496" y="279" width="1" height="5" fill="#ff00ff"/><rect x="497" y="281" width="1" height="3" fill="#ff00ff"/><rect x="498" y="281" width="1" height="2" fill="#ff00ff"/><rect x="499" y="280" width="1" height="3" fill="#ff00ff"/><rect x="500" y="280" width="1" height="2" fill="#ff00ff"/><rect x="501" y="280" width="1" height="3" fill="#ff00ff"/><rect x="502" y="279" width="1" height="4" fill="#ff00ff"/><rect x="503" y="279" width="1" height="2" fill="#ff00ff"/><rect x="504" y="276" width="1" height="5" fill="#ff00ff"/><rect x="505" y="276" width="1" height="4" fill="#ff00ff"/><rect x="506" y="279" width="1" height="4" fill="#ff00ff"/><rect x="507" y="281" width="1" height="2" fill="#ff00ff"/><rect x="508" y="281" width="1" height="2" fill="#ff00ff"/><rect x="509" y="282" width="1" height="2" fill="#ff00ff"/><g font-family="Liberation Sans, sans-serif" font-size="12" fill="#000" shape-rendering="auto"><text transform="translate(54.3 76.9) scale(.9 1)" text-anchor="end">500</text><text transform="translate(54.3 103.9) scale(.9 1)" text-anchor="end">400</text><text transform="translate(54.3 129.9) scale(.9 1)" text-anchor="end">300</text><text transform="translate(54.3 155.9) scale(.9 1)" text-anchor="end">200</text><text transform="translate(54.3 181.9) scale(.9 1)" text-anchor="end">100</text><text transform="translate(533 76.9) scale(.9 1)" text-anchor="start">16</text><text transform="translate(533 93.9) scale(.9 1)" text-anchor="start">14</text><text transform="translate(533 109.9) scale(.9 1)" text-anchor="start">12</text><text transform="translate(533 126.9) scale(.9 1)" text-anchor="start">10</text><text transform="translate(533 142.9) scale(.9 1)" text-anchor="start">8</text><text transform="translate(533 158.9) scale(.9 1)" text-anchor="start">6</text><text transform="translate(533 175.9) scale(.9 1)" text-anchor="start">4</text><text transform="translate(533 191.9) scale(.9 1)" text-anchor="start">2</text><text transform="translate(54.3 226.9) scale(.9 1)" text-anchor="end">10</text><text transform="translate(54.3 253.9) scale(.9 1)" text-anchor="end">8</text><text transform="translate(54.3 279.9) scale(.9 1)" text-anchor="end">6</text><text transform="translate(54.3 305.9) scale(.9 1)" text-anchor="end">4</text><text transform="translate(54.3 331.9) scale(.9 1)" text-anchor="end">2</text><text transform="translate(533 226.9) scale(.9 1)" text-anchor="start">20</text><text transform="translate(533 253.9) scale(.9 1)" text-anchor="start">16</text><text transform="translate(533 279.9) scale(.9 1)" text-anchor="start">12</text><text transform="translate(533 305.9) scale(.9 1)" text-anchor="start">8</text><text transform="translate(533 331.9) scale(.9 1)" text-anchor="start">4</text><text transform="translate(63.3 217.0) scale(.9 1)" text-anchor="middle">0.0</text><text transform="translate(63.3 367.0) scale(.9 1)" text-anchor="middle">0.0</text><text transform="translate(115.19999999999999 217.0) scale(.9 1)" text-anchor="middle">0.5</text><text transform="translate(115.19999999999999 367.0) scale(.9 1)" text-anchor="middle">0.5</text><text transform="translate(167.1 217.0) scale(.9 1)" text-anchor="middle">1.0</text><text transform="translate(167.1 367.0) scale(.9 1)" text-anchor="middle">1.0</text><text transform="translate(219.0 217.0) scale(.9 1)" text-anchor="middle">1.5</text><text transform="translate(219.0 367.0) scale(.9 1)" text-anchor="middle">1.5</text><text transform="translate(270.9 217.0) scale(.9 1)" text-anchor="middle">2.0</text><text transform="translate(270.9 367.0) scale(.9 1)" text-anchor="middle">2.0</text><text transform="translate(322.8 217.0) scale(.9 1)" text-anchor="middle">2.5</text><text transform="translate(322.8 367.0) scale(.9 1)" text-anchor="middle">2.5</text><text transform="translate(374.7 217.0) scale(.9 1)" text-anchor="middle">3.0</text><text transform="translate(374.7 367.0) scale(.9 1)" text-anchor="middle">3.0</text><text transform="translate(426.6 217.0) scale(.9 1)" text-anchor="middle">3.5</text><text transform="translate(426.6 367.0) scale(.9 1)" text-anchor="middle">3.5</text><text transform="translate(478.5 217.0) scale(.9 1)" text-anchor="middle">4.0</text><text transform="translate(478.5 367.0) scale(.9 1)" text-anchor="middle">4.0</text><text transform="translate(530.4 217.0) scale(.9 1)" text-anchor="middle">4.5</text><text transform="translate(530.4 367.0) scale(.9 1)" text-anchor="middle">4.5</text></g></svg>

<!-- stat groups -->
<div class="grp" style="left:18px;top:374px;width:170px;height:63px;"></div>
<div class="cap" style="left:26px;top:367px;width:62px;height:14px;"></div>
<div class="sq" style="left:28px;top:371px;background:#00ffff;"></div>

<div class="lbl" style="left:26px;top:382px;">平均:</div>
<div class="lbl" style="left:26px;top:400px;">最大:</div>
<div class="lbl" style="left:26px;top:418px;">合計 :</div>

<div class="grp" style="left:198px;top:374px;width:170px;height:63px;"></div>
<div class="cap" style="left:206px;top:367px;width:72px;height:14px;"></div>
<div class="sq" style="left:208px;top:371px;background:#ffff00;"></div>

<div class="lbl" style="left:208px;top:382px;">平均:</div>
<div class="lbl" style="left:208px;top:400px;">最大:</div>
<div class="lbl" style="left:208px;top:418px;">合計 :</div>

<div class="grp" style="left:379px;top:374px;width:170px;height:47px;"></div>
<div class="cap" style="left:387px;top:367px;width:42px;height:14px;"></div>
<div class="sq" style="left:389px;top:371px;background:#ff00ff;"></div>

<div class="lbl" style="left:388px;top:382px;">平均:</div>
<div class="lbl" style="left:388px;top:400px;">最大:</div>


<!-- right panel -->
<div class="btn" style="left:562px;top:59px;width:68px;">開始</div>
<div class="btn" style="left:654px;top:59px;width:68px;padding-right:2px;">終了(<u>X</u>)</div>
<div style="left:656px;top:61px;width:64px;height:15px;border:1px dotted;border-color:#c00000 #c00000 #b0b000 #b0b000;"></div>

<div class="rgrp" style="left:561px;top:92px;width:162px;height:74px;"></div>
<div class="cap" style="left:568px;top:85px;width:61px;height:14px;"></div>
<div style="left:570px;top:85px;color:#0000ff;letter-spacing:-3.4px;">ディスク<span style="position:static;letter-spacing:0">情報</span></div>
<div class="lbl" style="left:567.5px;top:100px;letter-spacing:-3.6px;">タイ<span style="position:static;letter-spacing:-1px">プ</span><span style="position:static;letter-spacing:0">:</span></div>

<div class="lbl" style="left:568px;top:130px;letter-spacing:-0.5px">日付:</div>
<div style="left:618px;top:145px;color:#000080;letter-spacing:0.3px;">ｷI･ﾆｸﾈ(<span style="position:static;letter-spacing:-0.7px">Data</span></div>

<div class="rgrp" style="left:561px;top:173px;width:162px;height:167px;"></div>
<div class="cap" style="left:568px;top:166px;width:46px;height:14px;"></div>

<div class="lbl" style="left:568px;top:188px;">転送速度</div>
<div class="edit" style="left:631px;top:185px;width:82px;height:20px;line-height:17px;">最大</div>
<div style="left:696px;top:187px;width:15px;height:16px;background:#c0c0c0;border-radius:2px;">
 <svg width="15" height="16" viewBox="0 0 15 16" style="position:absolute;left:0;top:0"><path d="M0 0h6v1h-4v1h-1v4h-1z" fill="#fff"/><path d="M3.5 5.5l4 4l4-4" stroke="#808080" stroke-width="2" fill="none"/></svg>
</div>
<div class="lbl" style="left:568px;top:213px;">開始</div>
<div class="edit" style="left:631px;top:209px;width:70px;height:18px;"></div>
<div class="lbl" style="left:568px;top:235px;">終了位置</div>
<div class="edit" style="left:631px;top:232px;width:70px;height:18px;"></div>

<div class="cb" style="left:569px;top:255px;"><svg width="9" height="9" viewBox="0 0 9 9"><path d="M1 4l2.5 2.5l4.5-4.5" stroke="#00a000" stroke-width="2.2" fill="none"/></svg></div>

<div class="cb" style="left:569px;top:272px;"><svg width="9" height="9" viewBox="0 0 9 9"><path d="M1 4l2.5 2.5l4.5-4.5" stroke="#00a000" stroke-width="2.2" fill="none"/></svg></div>

<div class="cb" style="left:569px;top:288px;"><svg width="9" height="9" viewBox="0 0 9 9"><path d="M1 4l2.5 2.5l4.5-4.5" stroke="#00a000" stroke-width="2.2" fill="none"/></svg></div>

<div class="cb" style="left:569px;top:305px;"><svg width="9" height="9" viewBox="0 0 9 9"><path d="M1 4l2.5 2.5l4.5-4.5" stroke="#00a000" stroke-width="2.2" fill="none"/></svg></div>

<div class="cb" style="left:569px;top:321px;border-color:#c0c0c0;"><svg width="9" height="9" viewBox="0 0 9 9"><path d="M1 4l2.5 2.5l4.5-4.5" stroke="#c0c0c0" stroke-width="2" fill="none"/></svg></div>


<div class="rgrp" style="left:561px;top:344px;width:162px;height:24px;"></div>
<div class="lbl" style="left:568px;top:349px;">品質<span style="position:static;letter-spacing:-3.6px">スコア:</span></div>

<div class="rgrp" style="left:561px;top:374px;width:162px;height:63px;"></div>
<div class="lbl" style="left:568px;top:381px;">進行状況:</div>
<div class="lbl" style="left:567px;top:400px;letter-spacing:-3.3px;">ポジション:</div>
<div class="lbl" style="left:568px;top:418px;">速度:</div>

<div class="tx" style="left:21.5px;top:38px;color:#000;transform:scaleX(0.971)">Disc Quality</div>
<div class="tx" style="left:39.6px;top:367px;color:#000;transform:scaleX(0.946)">PI Errors</div>
<div class="tx" style="left:219.4px;top:367px;color:#000;transform:scaleX(0.957)">PI Failures</div>
<div class="tx" style="left:402.3px;top:367px;color:#000;transform:scaleX(0.961)">Jitter</div>
<div class="tx" style="left:388.7px;top:423px;color:#000;transform:scaleX(0.944)">PO Failures:</div>
<div class="tx" style="left:154.9px;top:382px;color:#000080;transform:scaleX(0.900)">7.19</div>
<div class="tx" style="left:156.9px;top:400px;color:#000080;transform:scaleX(0.900)">245</div>
<div class="tx" style="left:145.9px;top:418px;color:#000080;transform:scaleX(0.900)">86408</div>
<div class="tx" style="left:336.6px;top:382px;color:#000080;transform:scaleX(0.900)">0.13</div>
<div class="tx" style="left:350.7px;top:400px;color:#000080;transform:scaleX(0.900)">6</div>
<div class="tx" style="left:333.7px;top:418px;color:#000080;transform:scaleX(0.900)">1212</div>
<div class="tx" style="left:505.0px;top:382px;color:#000080;transform:scaleX(0.900)">8.61</div>
<div class="tx" style="left:531.6px;top:382px;color:#000080;transform:scaleX(0.667)">%</div>
<div class="tx" style="left:506.3px;top:400px;color:#000080;transform:scaleX(0.900)">12.0</div>
<div class="tx" style="left:531.6px;top:400px;color:#000080;transform:scaleX(0.667)">%</div>
<div class="tx" style="left:531.5px;top:423px;color:#000080;transform:scaleX(0.900)">0</div>
<div class="tx" style="left:616.7px;top:100px;color:#000080;transform:scaleX(0.894)">DVD-R</div>
<div class="tx" style="left:616.6px;top:115px;color:#000080;transform:scaleX(0.890)">RITEKG04</div>
<div class="tx" style="left:616.6px;top:130px;color:#000080;transform:scaleX(0.923)">17 December 2004</div>
<div class="tx" style="left:568.3px;top:115px;color:#000;transform:scaleX(0.928)">ID:</div>
<div class="tx" style="left:568.6px;top:145px;color:#000;transform:scaleX(0.888)">Label:</div>
<div class="tx" style="left:569.3px;top:166px;color:#0000ff;transform:scaleX(0.976)">Settings</div>
<div class="tx" style="left:633.1px;top:211px;color:#000;transform:scaleX(0.957)">0000 MB</div>
<div class="tx" style="left:633.4px;top:234px;color:#000;transform:scaleX(0.952)">4451 MB</div>
<div class="tx" style="left:584.5px;top:255px;color:#000;transform:scaleX(0.948)">Show C1/PIE</div>
<div class="tx" style="left:584.5px;top:272px;color:#000;transform:scaleX(0.949)">Show C2/PIF</div>
<div class="tx" style="left:584.5px;top:289px;color:#000;transform:scaleX(0.982)">Show Jitter</div>
<div class="tx" style="left:584.5px;top:305px;color:#000;transform:scaleX(0.922)">Show Read Speed</div>
<div class="tx" style="left:584.5px;top:321px;color:#a0a0a0;transform:scaleX(0.929)">Show Write Speed</div>
<div class="tx" style="left:694.6px;top:350px;color:#000080;transform:scaleX(0.900)">97</div>
<div class="tx" style="left:678.7px;top:381px;color:#000080;transform:scaleX(0.900)">100</div>
<div class="tx" style="left:700.4px;top:381px;color:#000080;transform:scaleX(0.656)">%</div>
<div class="tx" style="left:662.0px;top:400px;color:#000080;transform:scaleX(0.940)">4450 MB</div>
<div class="tx" style="left:676.0px;top:418px;color:#000080;transform:scaleX(0.918)">8.34 X</div>
</body>
</html>
